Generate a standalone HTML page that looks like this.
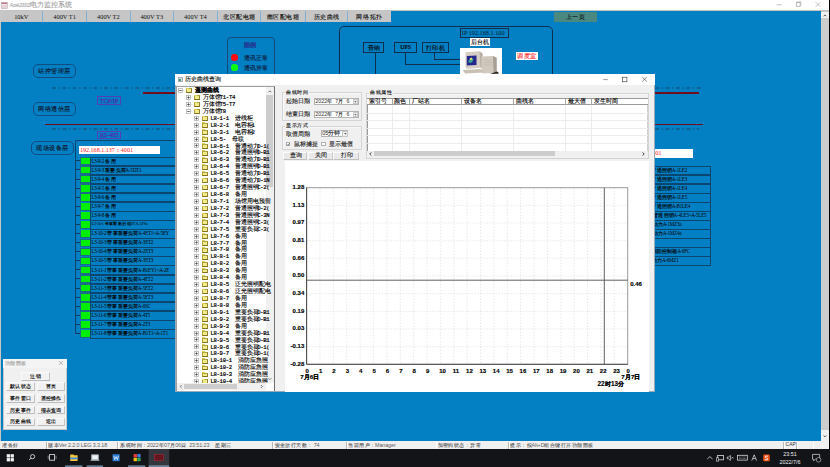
<!DOCTYPE html><html><head><meta charset="utf-8"><style>
html,body{margin:0;padding:0;}
body{width:830px;height:467px;overflow:hidden;position:relative;background:#0380c3;font-family:"Liberation Sans",sans-serif;}
div{position:absolute;box-sizing:border-box;}
.t{white-space:nowrap;line-height:1;}
.sr{font-family:"Liberation Serif",serif;}
.c{display:inline-block;vertical-align:top;line-height:1;text-align-last:justify;font-family:"Liberation Sans",sans-serif;-webkit-text-stroke:0.6px currentColor;}
body.cjk .c{-webkit-text-stroke:0.12px currentColor;}
</style></head><body>
<div style="left:0px;top:0px;width:830px;height:10.5px;background:#fff;"></div>
<div style="left:0px;top:10.1px;width:830px;height:0.7px;background:#c4c4c4;"></div>
<svg style="position:absolute;left:1px;top:1.5px;" width="7" height="7"><rect x="0.3" y="0.3" width="6.2" height="6.2" fill="#f4eeee" stroke="#b8a8b0" stroke-width="0.6"/><rect x="0.6" y="0.6" width="5.6" height="1.4" fill="#c07888"/><path d="M1 3.3 H6 M1 4.6 H6 M1 5.8 H6" stroke="#c8a0a8" stroke-width="0.4"/></svg>
<div class="t" style="left:9.8px;top:1.6px;color:#a0a0a0;font-size:6.6px;"><span style="font-size:5.2px;letter-spacing:-0.72px;vertical-align:0.3px;">Acrel-2000Z</span><span class="c" style="width:6em">电力监控系统</span></div>
<svg style="position:absolute;left:770px;top:0px;" width="55" height="10"><line x1="6.5" y1="4.7" x2="11.5" y2="4.7" stroke="#999" stroke-width="0.6"/><rect x="26.3" y="2.6" width="3.8" height="3.8" fill="none" stroke="#999" stroke-width="0.6"/><path d="M27.3 2.6 V1.8 H30.9 V5.4 H30.1" fill="none" stroke="#999" stroke-width="0.5"/><path d="M45.7 2.2 L50.3 6.8 M50.3 2.2 L45.7 6.8" stroke="#999" stroke-width="0.6"/></svg>
<div style="left:0px;top:10.8px;width:42.5px;height:11.5px;background:#c6c6c6;"></div>
<div class="t sr" style="left:0px;top:13.6px;width:42.5px;text-align:center;font-size:6.4px;color:#111;">10kV</div>
<div style="left:42.5px;top:10.8px;width:44.2px;height:11.5px;background:#c6c6c6;"></div>
<div style="left:42.0px;top:10.8px;width:1.1px;height:11.5px;background:#7fb0d8;"></div>
<div class="t sr" style="left:42.5px;top:13.6px;width:44.2px;text-align:center;font-size:6.4px;color:#111;">400V T1</div>
<div style="left:86.7px;top:10.8px;width:43.3px;height:11.5px;background:#c6c6c6;"></div>
<div style="left:86.2px;top:10.8px;width:1.1px;height:11.5px;background:#7fb0d8;"></div>
<div class="t sr" style="left:86.7px;top:13.6px;width:43.3px;text-align:center;font-size:6.4px;color:#111;">400V T2</div>
<div style="left:130px;top:10.8px;width:43.5px;height:11.5px;background:#c6c6c6;"></div>
<div style="left:129.5px;top:10.8px;width:1.1px;height:11.5px;background:#7fb0d8;"></div>
<div class="t sr" style="left:130px;top:13.6px;width:43.5px;text-align:center;font-size:6.4px;color:#111;">400V T3</div>
<div style="left:173.5px;top:10.8px;width:43.80000000000001px;height:11.5px;background:#c6c6c6;"></div>
<div style="left:173.0px;top:10.8px;width:1.1px;height:11.5px;background:#7fb0d8;"></div>
<div class="t sr" style="left:173.5px;top:13.6px;width:43.80000000000001px;text-align:center;font-size:6.4px;color:#111;">400V T4</div>
<div style="left:217.3px;top:10.8px;width:43.5px;height:11.5px;background:#c6c6c6;"></div>
<div style="left:216.8px;top:10.8px;width:1.1px;height:11.5px;background:#7fb0d8;"></div>
<div class="t " style="left:217.3px;top:13.6px;width:43.5px;text-align:center;font-size:6.4px;color:#111;"><span class="c" style="width:5em">北区配电箱</span></div>
<div style="left:260.8px;top:10.8px;width:44.19999999999999px;height:11.5px;background:#c6c6c6;"></div>
<div style="left:260.3px;top:10.8px;width:1.1px;height:11.5px;background:#7fb0d8;"></div>
<div class="t " style="left:260.8px;top:13.6px;width:44.19999999999999px;text-align:center;font-size:6.4px;color:#111;"><span class="c" style="width:5em">南区配电箱</span></div>
<div style="left:305px;top:10.8px;width:42.60000000000002px;height:11.5px;background:#c6c6c6;"></div>
<div style="left:304.5px;top:10.8px;width:1.1px;height:11.5px;background:#7fb0d8;"></div>
<div class="t " style="left:305px;top:13.6px;width:42.60000000000002px;text-align:center;font-size:6.4px;color:#111;"><span class="c" style="width:4em">历史曲线</span></div>
<div style="left:347.6px;top:10.8px;width:43.39999999999998px;height:11.5px;background:#c6c6c6;"></div>
<div style="left:347.1px;top:10.8px;width:1.1px;height:11.5px;background:#7fb0d8;"></div>
<div class="t " style="left:347.6px;top:13.6px;width:43.39999999999998px;text-align:center;font-size:6.4px;color:#111;"><span class="c" style="width:4em">网络拓扑</span></div>
<div style="left:553.6px;top:11.6px;width:43px;height:10.9px;background:#4a8880;"></div>
<div class="t" style="left:553.6px;top:13.8px;width:43px;text-align:center;font-size:6.4px;color:#0a1414;"><span class="c" style="width:3em">上一页</span></div>
<div style="left:0px;top:10.6px;width:1.1px;height:430.4px;background:#c8c8c8;"></div>
<div style="left:821.0px;top:10.6px;width:7.7px;height:430.4px;background:#cdcdcd;"></div>
<div style="left:821.0px;top:10.6px;width:7.7px;height:7.7px;background:#f0f0f0;border-top:0.6px solid #c8c8c8;"></div>
<div style="left:821.0px;top:430.4px;width:7.7px;height:10.6px;background:#f0f0f0;"></div>
<svg style="position:absolute;left:821px;top:10px;" width="8" height="432"><path d="M2.6 6.3 L4.0 4.9 L5.4 6.3" fill="none" stroke="#505050" stroke-width="0.9"/><path d="M2.6 425.5 L4.0 426.9 L5.4 425.5" fill="none" stroke="#505050" stroke-width="0.9"/></svg>
<div style="left:828.6px;top:0px;width:1.4px;height:467px;background:#050505;"></div>
<div style="left:227.2px;top:36.6px;width:47.6px;height:60px;border:0.9px solid #144a78;border-radius:4px;"></div>
<div class="t" style="left:244px;top:41.8px;font-size:6.2px;color:#1f3f98;font-weight:bold;"><span class="c" style="width:2em">图例</span></div>
<div style="left:231.2px;top:54.3px;width:6.6px;height:6.6px;background:#ff0a0a;border-radius:50%;"></div>
<div style="left:231.2px;top:64.4px;width:6.6px;height:6.6px;background:#0aff0a;border-radius:50%;"></div>
<div class="t" style="left:244px;top:55px;font-size:6px;color:#0a1a3a;"><span class="c" style="width:4em">通讯正常</span></div>
<div class="t" style="left:244px;top:65px;font-size:6px;color:#0a1a3a;"><span class="c" style="width:4em">通讯异常</span></div>
<div style="left:339.4px;top:26.2px;width:213.2px;height:80px;border:0.9px solid #0c2f4f;border-radius:5px;"></div>
<div style="left:363.2px;top:42.4px;width:21.30000000000001px;height:10.9px;border:0.9px solid #0c2f4f;"></div>
<div class="t " style="left:363.2px;top:45.2px;width:21.30000000000001px;text-align:center;color:#000;font-size:6.2px;"><span class="c" style="width:2em">音响</span></div>
<div style="left:394.2px;top:42.4px;width:23.0px;height:10.9px;border:0.9px solid #0c2f4f;"></div>
<div class="t sr" style="left:394.2px;top:45.2px;width:23.0px;text-align:center;color:#000;-webkit-text-stroke:0.2px #000;font-size:5.8px;">UPS</div>
<div style="left:421.6px;top:42.4px;width:27.399999999999977px;height:10.9px;border:0.9px solid #0c2f4f;"></div>
<div class="t " style="left:421.6px;top:45.2px;width:27.399999999999977px;text-align:center;color:#000;font-size:6.2px;"><span class="c" style="width:3em">打印机</span></div>
<div style="left:375.0px;top:53.3px;width:0.9px;height:25px;background:#0c2f4f;"></div>
<div style="left:405.0px;top:53.3px;width:0.9px;height:11.3px;background:#0c2f4f;"></div>
<div style="left:405.0px;top:63.8px;width:54.6px;height:0.9px;background:#0c2f4f;"></div>
<div style="left:434.2px;top:53.3px;width:0.9px;height:6.3px;background:#0c2f4f;"></div>
<div style="left:434.2px;top:58.9px;width:25.4px;height:0.9px;background:#0c2f4f;"></div>
<div style="left:460.4px;top:28.4px;width:48.3px;height:9.4px;border:0.9px solid #0c2f4f;"></div>
<div class="t" style="left:461.8px;top:30.3px;font-size:6.25px;color:#0a1a2a;font-family:'Liberation Serif',serif;">IP 192.168.1.100</div>
<div style="left:470.2px;top:38.2px;width:20px;height:8.3px;background:#fff;"></div>
<div class="t" style="left:470.2px;top:39.3px;width:20px;text-align:center;font-size:6.2px;color:#000;"><span class="c" style="width:3em">后台机</span></div>
<div style="left:459.6px;top:48.0px;width:42.6px;height:30px;background:#fff;"></div>
<svg style="position:absolute;left:459.6px;top:48px;" width="43" height="26"><path d="M5.5 4.2 L19.5 3.2 L22.5 5.5 L22.5 19.5 L7.0 21.0 L5.5 19.5Z" fill="#d6cec4"/><path d="M19.5 3.2 L22.5 5.5 L22.5 19.5 L20.5 19.8Z" fill="#b8aea2"/><path d="M6.8 7.9 L16.5 7.5 L16.5 17.0 L6.8 17.4Z" fill="#23278e"/><path d="M8.5 12.5 Q10.5 9.8 13.5 10.8 L12.2 14.2 Q10 15.2 8.5 14.6Z" fill="#3aa890"/><path d="M9.6 10.6 L11.8 9.6 L12.4 11.4 L10.2 12.0Z" fill="#e8e070"/><path d="M21.4 8.5 L33.0 8.0 L36.6 9.8 L36.6 24.8 L24.0 25.5 L21.4 24.2Z" fill="#d2c9be"/><path d="M33.0 8.0 L36.6 9.8 L36.6 24.8 L33.6 24.6Z" fill="#a89e94"/><path d="M24 12 H32 M24 14.5 H32 M24 17 H32" stroke="#b8afa4" stroke-width="0.5"/><path d="M2.8 22.0 L20.5 21.0 L23.5 24.5 L5.0 25.6Z" fill="#c9c0b4"/><path d="M36.6 23.5 Q39.5 24.5 38.5 25.8 L30 26 Z" fill="#2a2a2a"/></svg>
<div style="left:515.5px;top:52.1px;width:22.5px;height:8.1px;background:#fff;"></div>
<div class="t" style="left:515.5px;top:53.0px;width:22.5px;text-align:center;font-size:6.2px;color:#ff1a1a;"><span class="c" style="width:3em">调度室</span></div>
<div style="left:32.6px;top:63.7px;width:43.4px;height:14.599999999999994px;border:0.9px solid #0e4d80;border-radius:5px;"></div>
<div class="t" style="left:32.6px;top:67.8px;width:43.4px;text-align:center;font-size:6.4px;color:#08142a;"><span class="c" style="width:5em">站控管理层</span></div>
<div style="left:32.6px;top:102.2px;width:43.4px;height:14.299999999999997px;border:0.9px solid #0e4d80;border-radius:5px;"></div>
<div class="t" style="left:32.6px;top:106.14999999999999px;width:43.4px;text-align:center;font-size:6.4px;color:#08142a;"><span class="c" style="width:5em">网络通信层</span></div>
<div style="left:30.6px;top:140.6px;width:43.4px;height:14.400000000000006px;border:0.9px solid #0e4d80;border-radius:5px;"></div>
<div class="t" style="left:30.6px;top:144.60000000000002px;width:43.4px;text-align:center;font-size:6.4px;color:#08142a;"><span class="c" style="width:5em">现场设备层</span></div>
<svg style="position:absolute;left:52.2px;top:86.8px;" width="650.8" height="2"><line x1="0" y1="1" x2="650.8" y2="1" stroke="#164466" stroke-width="0.95" stroke-dasharray="3.8 2.7 1.2 2.7"/></svg>
<div style="left:142.5px;top:92.45px;width:556px;height:1.8px;background:#6e0e1c;"></div>
<div style="left:45px;top:123.7px;width:657.7px;height:1.8px;background:#6e0e1c;"></div>
<svg style="position:absolute;left:52.2px;top:128.4px;" width="646.8" height="2"><line x1="0" y1="1" x2="646.8" y2="1" stroke="#164466" stroke-width="0.95" stroke-dasharray="3.8 2.7 1.2 2.7"/></svg>
<div style="left:96.9px;top:96px;width:24.19999999999999px;height:9.299999999999997px;border:0.9px solid #5040b8;"></div>
<div class="t sr" style="left:96.9px;top:97.8px;width:24.19999999999999px;text-align:center;font-size:6.2px;color:#4a30b0;-webkit-text-stroke:0.25px #4a30b0;">TCP/IP</div>
<div style="left:97px;top:130.6px;width:24.200000000000003px;height:8.300000000000011px;border:0.9px solid #5040b8;"></div>
<div class="t sr" style="left:97px;top:132.4px;width:24.200000000000003px;text-align:center;font-size:6.2px;color:#4a30b0;-webkit-text-stroke:0.25px #4a30b0;">RS-485</div>
<div style="left:75.0px;top:140.0px;width:200px;height:194px;border-left:1.2px solid #0b4670;border-top:1.2px solid #0b4670;border-top-left-radius:2px;"></div>
<div style="left:79px;top:146px;width:80.9px;height:8.2px;background:#fff;"></div>
<div class="t" style="left:80.0px;top:147.2px;font-size:6.05px;color:#ff2020;font-family:'Liberation Serif',serif;">192.168.1.137<span class="c" style="width:1em">：</span>4001</div>
<div style="left:75.6px;top:160.4px;width:4.4px;height:0.9px;background:#0b3a5e;"></div>
<div style="left:80.3px;top:157.1px;width:9.6px;height:8.48px;background:#1a6a8a;"></div>
<div style="left:80.9px;top:157.8px;width:8.7px;height:6.5px;background:#00ee00;"></div>
<div style="left:89.9px;top:156.5px;width:120px;height:9.68px;border:1.1px solid #0b4670;border-right:none;"></div>
<div class="t" style="left:91.5px;top:158.6px;font-size:5.1px;color:#000;letter-spacing:-0.26px;font-family:'Liberation Serif',serif;">L3-9-2 <span class="c" style="width:2em">备用</span></div>
<div style="left:75.6px;top:169.48000000000002px;width:4.4px;height:0.9px;background:#0b3a5e;"></div>
<div style="left:80.3px;top:166.18px;width:9.6px;height:8.48px;background:#1a6a8a;"></div>
<div style="left:80.9px;top:166.88000000000002px;width:8.7px;height:6.5px;background:#00ee00;"></div>
<div style="left:89.9px;top:165.58px;width:120px;height:9.68px;border:1.1px solid #0b4670;border-right:none;"></div>
<div class="t" style="left:91.5px;top:167.68px;font-size:5.1px;color:#000;letter-spacing:-0.26px;font-family:'Liberation Serif',serif;">L3-9-3 <span class="c" style="width:4em">重要负荷</span>A-5DT1</div>
<div style="left:75.6px;top:178.56px;width:4.4px;height:0.9px;background:#0b3a5e;"></div>
<div style="left:80.3px;top:175.26px;width:9.6px;height:8.48px;background:#1a6a8a;"></div>
<div style="left:80.9px;top:175.96px;width:8.7px;height:6.5px;background:#00ee00;"></div>
<div style="left:89.9px;top:174.66px;width:120px;height:9.68px;border:1.1px solid #0b4670;border-right:none;"></div>
<div class="t" style="left:91.5px;top:176.76px;font-size:5.1px;color:#000;letter-spacing:-0.26px;font-family:'Liberation Serif',serif;">L3-9-4 <span class="c" style="width:2em">备用</span></div>
<div style="left:75.6px;top:187.64000000000001px;width:4.4px;height:0.9px;background:#0b3a5e;"></div>
<div style="left:80.3px;top:184.34px;width:9.6px;height:8.48px;background:#1a6a8a;"></div>
<div style="left:80.9px;top:185.04000000000002px;width:8.7px;height:6.5px;background:#00ee00;"></div>
<div style="left:89.9px;top:183.74px;width:120px;height:9.68px;border:1.1px solid #0b4670;border-right:none;"></div>
<div class="t" style="left:91.5px;top:185.84px;font-size:5.1px;color:#000;letter-spacing:-0.26px;font-family:'Liberation Serif',serif;">L3-9-5 <span class="c" style="width:2em">备用</span></div>
<div style="left:75.6px;top:196.72px;width:4.4px;height:0.9px;background:#0b3a5e;"></div>
<div style="left:80.3px;top:193.42px;width:9.6px;height:8.48px;background:#1a6a8a;"></div>
<div style="left:80.9px;top:194.12px;width:8.7px;height:6.5px;background:#00ee00;"></div>
<div style="left:89.9px;top:192.82px;width:120px;height:9.68px;border:1.1px solid #0b4670;border-right:none;"></div>
<div class="t" style="left:91.5px;top:194.92px;font-size:5.1px;color:#000;letter-spacing:-0.26px;font-family:'Liberation Serif',serif;">L3-9-6 <span class="c" style="width:2em">备用</span></div>
<div style="left:75.6px;top:205.8px;width:4.4px;height:0.9px;background:#0b3a5e;"></div>
<div style="left:80.3px;top:202.5px;width:9.6px;height:8.48px;background:#1a6a8a;"></div>
<div style="left:80.9px;top:203.20000000000002px;width:8.7px;height:6.5px;background:#00ee00;"></div>
<div style="left:89.9px;top:201.9px;width:120px;height:9.68px;border:1.1px solid #0b4670;border-right:none;"></div>
<div class="t" style="left:91.5px;top:204.0px;font-size:5.1px;color:#000;letter-spacing:-0.26px;font-family:'Liberation Serif',serif;">L3-9-7 <span class="c" style="width:2em">备用</span></div>
<div style="left:75.6px;top:214.88000000000002px;width:4.4px;height:0.9px;background:#0b3a5e;"></div>
<div style="left:80.3px;top:211.58px;width:9.6px;height:8.48px;background:#1a6a8a;"></div>
<div style="left:80.9px;top:212.28000000000003px;width:8.7px;height:6.5px;background:#00ee00;"></div>
<div style="left:89.9px;top:210.98000000000002px;width:120px;height:9.68px;border:1.1px solid #0b4670;border-right:none;"></div>
<div class="t" style="left:91.5px;top:213.08px;font-size:5.1px;color:#000;letter-spacing:-0.26px;font-family:'Liberation Serif',serif;">L3-9-8 <span class="c" style="width:2em">备用</span></div>
<div style="left:75.6px;top:223.96px;width:4.4px;height:0.9px;background:#0b3a5e;"></div>
<div style="left:80.3px;top:220.66px;width:9.6px;height:8.48px;background:#1a6a8a;"></div>
<div style="left:80.9px;top:221.36px;width:8.7px;height:6.5px;background:#00ee00;"></div>
<div style="left:89.9px;top:220.06px;width:120px;height:9.68px;border:1.1px solid #0b4670;border-right:none;"></div>
<div class="t" style="left:91.5px;top:222.16px;font-size:4.3px;color:#000;letter-spacing:-0.26px;font-family:'Liberation Serif',serif;">L3-10-1 <span class="c" style="width:6em">带事重新启动</span>DCS.APSa</div>
<div style="left:75.6px;top:233.04px;width:4.4px;height:0.9px;background:#0b3a5e;"></div>
<div style="left:80.3px;top:229.73999999999998px;width:9.6px;height:8.48px;background:#1a6a8a;"></div>
<div style="left:80.9px;top:230.44px;width:8.7px;height:6.5px;background:#00ee00;"></div>
<div style="left:89.9px;top:229.14px;width:120px;height:9.68px;border:1.1px solid #0b4670;border-right:none;"></div>
<div class="t" style="left:91.5px;top:231.23999999999998px;font-size:5.1px;color:#000;letter-spacing:-0.26px;font-family:'Liberation Serif',serif;">L3-10-2 <span class="c" style="width:6em">带事重要负荷</span>A-4ET1~A-5EY</div>
<div style="left:75.6px;top:242.12px;width:4.4px;height:0.9px;background:#0b3a5e;"></div>
<div style="left:80.3px;top:238.82px;width:9.6px;height:8.48px;background:#1a6a8a;"></div>
<div style="left:80.9px;top:239.52px;width:8.7px;height:6.5px;background:#00ee00;"></div>
<div style="left:89.9px;top:238.22px;width:120px;height:9.68px;border:1.1px solid #0b4670;border-right:none;"></div>
<div class="t" style="left:91.5px;top:240.32px;font-size:5.1px;color:#000;letter-spacing:-0.26px;font-family:'Liberation Serif',serif;">L3-10-3 <span class="c" style="width:6em">带事重要负荷</span>A-3ET2</div>
<div style="left:75.6px;top:251.20000000000002px;width:4.4px;height:0.9px;background:#0b3a5e;"></div>
<div style="left:80.3px;top:247.9px;width:9.6px;height:8.48px;background:#1a6a8a;"></div>
<div style="left:80.9px;top:248.60000000000002px;width:8.7px;height:6.5px;background:#00ee00;"></div>
<div style="left:89.9px;top:247.3px;width:120px;height:9.68px;border:1.1px solid #0b4670;border-right:none;"></div>
<div class="t" style="left:91.5px;top:249.4px;font-size:5.1px;color:#000;letter-spacing:-0.26px;font-family:'Liberation Serif',serif;">L3-10-4 <span class="c" style="width:6em">带事重要负荷</span>A-2ET3</div>
<div style="left:75.6px;top:260.28px;width:4.4px;height:0.9px;background:#0b3a5e;"></div>
<div style="left:80.3px;top:256.98px;width:9.6px;height:8.48px;background:#1a6a8a;"></div>
<div style="left:80.9px;top:257.68px;width:8.7px;height:6.5px;background:#00ee00;"></div>
<div style="left:89.9px;top:256.38px;width:120px;height:9.68px;border:1.1px solid #0b4670;border-right:none;"></div>
<div class="t" style="left:91.5px;top:258.48px;font-size:5.1px;color:#000;letter-spacing:-0.26px;font-family:'Liberation Serif',serif;">L3-10-5 <span class="c" style="width:6em">带事重要负荷</span>A-3ET3</div>
<div style="left:75.6px;top:269.36px;width:4.4px;height:0.9px;background:#0b3a5e;"></div>
<div style="left:80.3px;top:266.06000000000006px;width:9.6px;height:8.48px;background:#1a6a8a;"></div>
<div style="left:80.9px;top:266.76000000000005px;width:8.7px;height:6.5px;background:#00ee00;"></div>
<div style="left:89.9px;top:265.46000000000004px;width:120px;height:9.68px;border:1.1px solid #0b4670;border-right:none;"></div>
<div class="t" style="left:91.5px;top:267.56000000000006px;font-size:5.1px;color:#000;letter-spacing:-0.26px;font-family:'Liberation Serif',serif;">L3-11-1 <span class="c" style="width:6em">带事重要负荷</span>A-B1EY1~A-2E</div>
<div style="left:75.6px;top:278.44px;width:4.4px;height:0.9px;background:#0b3a5e;"></div>
<div style="left:80.3px;top:275.14000000000004px;width:9.6px;height:8.48px;background:#1a6a8a;"></div>
<div style="left:80.9px;top:275.84000000000003px;width:8.7px;height:6.5px;background:#00ee00;"></div>
<div style="left:89.9px;top:274.54px;width:120px;height:9.68px;border:1.1px solid #0b4670;border-right:none;"></div>
<div class="t" style="left:91.5px;top:276.64000000000004px;font-size:5.1px;color:#000;letter-spacing:-0.26px;font-family:'Liberation Serif',serif;">L3-11-2 <span class="c" style="width:6em">带事重要负荷</span>A-4ET2</div>
<div style="left:75.6px;top:287.52px;width:4.4px;height:0.9px;background:#0b3a5e;"></div>
<div style="left:80.3px;top:284.22px;width:9.6px;height:8.48px;background:#1a6a8a;"></div>
<div style="left:80.9px;top:284.92px;width:8.7px;height:6.5px;background:#00ee00;"></div>
<div style="left:89.9px;top:283.62px;width:120px;height:9.68px;border:1.1px solid #0b4670;border-right:none;"></div>
<div class="t" style="left:91.5px;top:285.72px;font-size:5.1px;color:#000;letter-spacing:-0.26px;font-family:'Liberation Serif',serif;">L3-11-3 <span class="c" style="width:6em">带事重要负荷</span>A-5ET2</div>
<div style="left:75.6px;top:296.59999999999997px;width:4.4px;height:0.9px;background:#0b3a5e;"></div>
<div style="left:80.3px;top:293.3px;width:9.6px;height:8.48px;background:#1a6a8a;"></div>
<div style="left:80.9px;top:294.0px;width:8.7px;height:6.5px;background:#00ee00;"></div>
<div style="left:89.9px;top:292.7px;width:120px;height:9.68px;border:1.1px solid #0b4670;border-right:none;"></div>
<div class="t" style="left:91.5px;top:294.8px;font-size:5.1px;color:#000;letter-spacing:-0.26px;font-family:'Liberation Serif',serif;">L3-11-4 <span class="c" style="width:6em">带事重要负荷</span>A-5ET3</div>
<div style="left:75.6px;top:305.67999999999995px;width:4.4px;height:0.9px;background:#0b3a5e;"></div>
<div style="left:80.3px;top:302.38px;width:9.6px;height:8.48px;background:#1a6a8a;"></div>
<div style="left:80.9px;top:303.08px;width:8.7px;height:6.5px;background:#00ee00;"></div>
<div style="left:89.9px;top:301.78px;width:120px;height:9.68px;border:1.1px solid #0b4670;border-right:none;"></div>
<div class="t" style="left:91.5px;top:303.88px;font-size:5.1px;color:#000;letter-spacing:-0.26px;font-family:'Liberation Serif',serif;">L3-11-5 <span class="c" style="width:6em">带事重要负荷</span>A-6SC</div>
<div style="left:75.6px;top:314.76px;width:4.4px;height:0.9px;background:#0b3a5e;"></div>
<div style="left:80.3px;top:311.46000000000004px;width:9.6px;height:8.48px;background:#1a6a8a;"></div>
<div style="left:80.9px;top:312.16px;width:8.7px;height:6.5px;background:#00ee00;"></div>
<div style="left:89.9px;top:310.86px;width:120px;height:9.68px;border:1.1px solid #0b4670;border-right:none;"></div>
<div class="t" style="left:91.5px;top:312.96000000000004px;font-size:5.1px;color:#000;letter-spacing:-0.26px;font-family:'Liberation Serif',serif;">L3-11-6 <span class="c" style="width:6em">带事重要负荷</span>A-4T5</div>
<div style="left:75.6px;top:323.84px;width:4.4px;height:0.9px;background:#0b3a5e;"></div>
<div style="left:80.3px;top:320.54px;width:9.6px;height:8.48px;background:#1a6a8a;"></div>
<div style="left:80.9px;top:321.24px;width:8.7px;height:6.5px;background:#00ee00;"></div>
<div style="left:89.9px;top:319.94px;width:120px;height:9.68px;border:1.1px solid #0b4670;border-right:none;"></div>
<div class="t" style="left:91.5px;top:322.04px;font-size:5.1px;color:#000;letter-spacing:-0.26px;font-family:'Liberation Serif',serif;">L3-11-7 <span class="c" style="width:6em">带事重要负荷</span>A-2T3</div>
<div style="left:75.6px;top:332.91999999999996px;width:4.4px;height:0.9px;background:#0b3a5e;"></div>
<div style="left:80.3px;top:329.62px;width:9.6px;height:8.48px;background:#1a6a8a;"></div>
<div style="left:80.9px;top:330.32px;width:8.7px;height:6.5px;background:#00ee00;"></div>
<div style="left:89.9px;top:329.02px;width:120px;height:9.68px;border:1.1px solid #0b4670;border-right:none;"></div>
<div class="t" style="left:91.5px;top:331.12px;font-size:5.1px;color:#000;letter-spacing:-0.26px;font-family:'Liberation Serif',serif;">L3-11-8 <span class="c" style="width:6em">带事重要负荷</span>A-B1T1~A-1T1</div>
<div style="left:612.4px;top:149.1px;width:80.9px;height:8.6px;background:#fff;"></div>
<div class="t" style="left:608.7px;top:150.3px;font-size:6.05px;color:#ff2020;font-family:'Liberation Serif',serif;">192.168.1.138<span class="c" style="width:1em">：</span>4001</div>
<div style="left:600px;top:165.8px;width:110.5px;height:9.65px;border:1.1px solid #0b4670;"></div>
<div class="t" style="left:537px;top:167.9px;width:150px;text-align:right;font-size:5.1px;color:#000;letter-spacing:-0.26px;font-family:'Liberation Serif',serif;">L3-12-1 <span class="c" style="width:4em">普通照明</span>A-1LE2</div>
<div style="left:600px;top:174.85000000000002px;width:110.5px;height:9.65px;border:1.1px solid #0b4670;"></div>
<div class="t" style="left:537px;top:176.95000000000002px;width:150px;text-align:right;font-size:5.1px;color:#000;letter-spacing:-0.26px;font-family:'Liberation Serif',serif;">L3-12-2 <span class="c" style="width:4em">普通照明</span>A-1LE3</div>
<div style="left:600px;top:183.9px;width:110.5px;height:9.65px;border:1.1px solid #0b4670;"></div>
<div class="t" style="left:537px;top:186.0px;width:150px;text-align:right;font-size:5.1px;color:#000;letter-spacing:-0.26px;font-family:'Liberation Serif',serif;">L3-12-3 <span class="c" style="width:4em">普通照明</span>A-1LE4</div>
<div style="left:600px;top:192.95000000000002px;width:110.5px;height:9.65px;border:1.1px solid #0b4670;"></div>
<div class="t" style="left:537px;top:195.05px;width:150px;text-align:right;font-size:5.1px;color:#000;letter-spacing:-0.26px;font-family:'Liberation Serif',serif;">L3-12-4 <span class="c" style="width:4em">普通照明</span>A-1LE5</div>
<div style="left:600px;top:202.0px;width:110.5px;height:9.65px;border:1.1px solid #0b4670;"></div>
<div class="t" style="left:540px;top:204.1px;width:150px;text-align:right;font-size:5.1px;color:#000;letter-spacing:-0.26px;font-family:'Liberation Serif',serif;">L3-12-5 <span class="c" style="width:4em">普通照明</span>A-B1LE4</div>
<div style="left:600px;top:211.05px;width:110.5px;height:9.65px;border:1.1px solid #0b4670;"></div>
<div class="t" style="left:556.3px;top:213.15px;width:150px;text-align:right;font-size:5.1px;color:#000;letter-spacing:-0.26px;font-family:'Liberation Serif',serif;">L3-12-6 <span class="c" style="width:4em">普通照明</span>A-4LE5~A-5LE5</div>
<div style="left:600px;top:220.10000000000002px;width:110.5px;height:9.65px;border:1.1px solid #0b4670;"></div>
<div class="t" style="left:531.2px;top:222.20000000000002px;width:150px;text-align:right;font-size:5.1px;color:#000;letter-spacing:-0.26px;font-family:'Liberation Serif',serif;">L3-12-7 <span class="c" style="width:4em">普通动力</span>A-1MZ3a</div>
<div style="left:600px;top:229.15000000000003px;width:110.5px;height:9.65px;border:1.1px solid #0b4670;"></div>
<div class="t" style="left:531.2px;top:231.25000000000003px;width:150px;text-align:right;font-size:5.1px;color:#000;letter-spacing:-0.26px;font-family:'Liberation Serif',serif;">L3-12-8 <span class="c" style="width:4em">普通动力</span>A-1MZ4a</div>
<div style="left:600px;top:238.20000000000002px;width:110.5px;height:9.65px;border:1.1px solid #0b4670;"></div>
<div style="left:600px;top:247.25px;width:110.5px;height:9.65px;border:1.1px solid #0b4670;"></div>
<div class="t" style="left:540px;top:249.35px;width:150px;text-align:right;font-size:5.1px;color:#000;letter-spacing:-0.26px;font-family:'Liberation Serif',serif;">L3-13-1 <span class="c" style="width:5em">消防控制箱</span>A-6FC</div>
<div style="left:600px;top:256.3px;width:110.5px;height:9.65px;border:1.1px solid #0b4670;"></div>
<div class="t" style="left:528.5px;top:258.40000000000003px;width:150px;text-align:right;font-size:5.1px;color:#000;letter-spacing:-0.26px;font-family:'Liberation Serif',serif;">L3-13-2 <span class="c" style="width:4em">普通动力</span>A-6MZ1</div>
<div style="left:2.6px;top:358.8px;width:64.5px;height:71.5px;background:#f0f0f0;border:0.6px solid #c8c8c8;"></div>
<div style="left:3px;top:359.2px;width:63.7px;height:9px;background:#f4f4f4;"></div>
<div class="t" style="left:4.5px;top:361px;font-size:5.4px;color:#a0a0a0;"><span class="c" style="width:4em">功能面板</span></div>
<svg style="position:absolute;left:58px;top:360px;" width="6" height="6"><path d="M0.9 1.0 L4.9 5.0 M4.9 1.0 L0.9 5.0" stroke="#909090" stroke-width="0.6"/></svg>
<div style="left:21.4px;top:372.1px;width:28.200000000000003px;height:8.799999999999988px;background:#f1f1f1;border:0.5px solid #fafafa;border-right:0.7px solid #c4c4c4;border-bottom:0.8px solid #bcbcbc;"></div>
<div class="t" style="left:21.4px;top:374.15000000000003px;width:28.200000000000003px;text-align:center;font-size:5.1px;color:#000;"><span class="c" style="width:2em">注销</span></div>
<div style="left:6px;top:382.4px;width:29.1px;height:8.800000000000045px;background:#f1f1f1;border:0.5px solid #fafafa;border-right:0.7px solid #c4c4c4;border-bottom:0.8px solid #bcbcbc;"></div>
<div class="t" style="left:6px;top:384.45px;width:29.1px;text-align:center;font-size:5.1px;color:#000;"><span class="c" style="width:4em">默认状态</span></div>
<div style="left:36.8px;top:382.4px;width:28.60000000000001px;height:8.800000000000045px;background:#f1f1f1;border:0.5px solid #fafafa;border-right:0.7px solid #c4c4c4;border-bottom:0.8px solid #bcbcbc;"></div>
<div class="t" style="left:36.8px;top:384.45px;width:28.60000000000001px;text-align:center;font-size:5.1px;color:#000;"><span class="c" style="width:2em">首页</span></div>
<div style="left:6px;top:394px;width:29.1px;height:8.6px;background:#f1f1f1;border:0.5px solid #fafafa;border-right:0.7px solid #c4c4c4;border-bottom:0.8px solid #bcbcbc;"></div>
<div class="t" style="left:6px;top:395.95px;width:29.1px;text-align:center;font-size:5.1px;color:#000;"><span class="c" style="width:4em">事件窗口</span></div>
<div style="left:36.8px;top:394px;width:28.60000000000001px;height:8.6px;background:#f1f1f1;border:0.5px solid #fafafa;border-right:0.7px solid #c4c4c4;border-bottom:0.8px solid #bcbcbc;"></div>
<div class="t" style="left:36.8px;top:395.95px;width:28.60000000000001px;text-align:center;font-size:5.1px;color:#000;"><span class="c" style="width:4em">遥控操作</span></div>
<div style="left:6px;top:405.5px;width:29.1px;height:8.799999999999988px;background:#f1f1f1;border:0.5px solid #fafafa;border-right:0.7px solid #c4c4c4;border-bottom:0.8px solid #bcbcbc;"></div>
<div class="t" style="left:6px;top:407.55px;width:29.1px;text-align:center;font-size:5.1px;color:#000;"><span class="c" style="width:4em">历史事件</span></div>
<div style="left:36.8px;top:405.5px;width:28.60000000000001px;height:8.799999999999988px;background:#f1f1f1;border:0.5px solid #fafafa;border-right:0.7px solid #c4c4c4;border-bottom:0.8px solid #bcbcbc;"></div>
<div class="t" style="left:36.8px;top:407.55px;width:28.60000000000001px;text-align:center;font-size:5.1px;color:#000;"><span class="c" style="width:4em">报表查询</span></div>
<div style="left:6px;top:417.5px;width:29.1px;height:8.6px;background:#f1f1f1;border:0.5px solid #fafafa;border-right:0.7px solid #c4c4c4;border-bottom:0.8px solid #bcbcbc;"></div>
<div class="t" style="left:6px;top:419.45px;width:29.1px;text-align:center;font-size:5.1px;color:#000;"><span class="c" style="width:4em">历史曲线</span></div>
<div style="left:36.8px;top:417.5px;width:28.60000000000001px;height:8.6px;background:#f1f1f1;border:0.5px solid #fafafa;border-right:0.7px solid #c4c4c4;border-bottom:0.8px solid #bcbcbc;"></div>
<div class="t" style="left:36.8px;top:419.45px;width:28.60000000000001px;text-align:center;font-size:5.1px;color:#000;"><span class="c" style="width:2em">退出</span></div>
<div style="left:0px;top:440.8px;width:828.6px;height:8.6px;background:#f0f0f0;"></div>
<div class="t" style="left:785.6px;top:443.2px;font-size:4.9px;color:#303030;">CAP</div>
<div style="left:46.3px;top:442px;width:0.6px;height:7px;background:#b8b8b8;"></div>
<div style="left:46.9px;top:442px;width:0.5px;height:7px;background:#fff;"></div>
<div style="left:117.1px;top:442px;width:0.6px;height:7px;background:#b8b8b8;"></div>
<div style="left:117.69999999999999px;top:442px;width:0.5px;height:7px;background:#fff;"></div>
<div style="left:227.7px;top:442px;width:0.6px;height:7px;background:#b8b8b8;"></div>
<div style="left:228.29999999999998px;top:442px;width:0.5px;height:7px;background:#fff;"></div>
<div style="left:272.1px;top:442px;width:0.6px;height:7px;background:#b8b8b8;"></div>
<div style="left:272.70000000000005px;top:442px;width:0.5px;height:7px;background:#fff;"></div>
<div style="left:346px;top:442px;width:0.6px;height:7px;background:#b8b8b8;"></div>
<div style="left:346.6px;top:442px;width:0.5px;height:7px;background:#fff;"></div>
<div style="left:435.7px;top:442px;width:0.6px;height:7px;background:#b8b8b8;"></div>
<div style="left:436.3px;top:442px;width:0.5px;height:7px;background:#fff;"></div>
<div style="left:508px;top:442px;width:0.6px;height:7px;background:#b8b8b8;"></div>
<div style="left:508.6px;top:442px;width:0.5px;height:7px;background:#fff;"></div>
<div style="left:783px;top:442px;width:0.6px;height:7px;background:#b8b8b8;"></div>
<div style="left:783.6px;top:442px;width:0.5px;height:7px;background:#fff;"></div>
<div style="left:796.3px;top:442px;width:0.6px;height:7px;background:#b8b8b8;"></div>
<div style="left:796.9px;top:442px;width:0.5px;height:7px;background:#fff;"></div>
<div style="left:812.8px;top:442px;width:0.6px;height:7px;background:#b8b8b8;"></div>
<div style="left:813.4px;top:442px;width:0.5px;height:7px;background:#fff;"></div>
<div class="t" style="left:2px;top:443px;font-size:5.4px;color:#606060;letter-spacing:-0.1px;"><span class="c" style="width:3em">准备好</span></div>
<div class="t" style="left:48px;top:443px;font-size:5.4px;color:#606060;letter-spacing:-0.1px;"><span class="c" style="width:2em">版本</span>Ver 2.2.0 LEG 3.3.18</div>
<div class="t" style="left:120px;top:443px;font-size:5.4px;color:#606060;letter-spacing:-0.1px;"><span class="c" style="width:5em">系统时间：</span>2022<span class="c" style="width:1em">年</span>07<span class="c" style="width:1em">月</span>06<span class="c" style="width:1em">日</span>&nbsp;&nbsp;23:51:23</div>
<div class="t" style="left:215.1px;top:443px;font-size:5.4px;color:#606060;letter-spacing:-0.1px;"><span class="c" style="width:3em">星期三</span></div>
<div class="t" style="left:274.5px;top:443px;font-size:5.4px;color:#606060;letter-spacing:-0.1px;"><span class="c" style="width:7em">安全运行天数：</span>&nbsp;74</div>
<div class="t" style="left:348px;top:443px;font-size:5.4px;color:#606060;letter-spacing:-0.1px;"><span class="c" style="width:5em">当前用户：</span>Manager</div>
<div class="t" style="left:437.5px;top:443px;font-size:5.4px;color:#606060;letter-spacing:-0.1px;"><span class="c" style="width:8em">加密狗状态：异常</span></div>
<div class="t" style="left:510px;top:443px;font-size:5.4px;color:#606060;letter-spacing:-0.1px;"><span class="c" style="width:4em">提示：按</span>Alt+D<span class="c" style="width:9em">组合键打开功能面板</span></div>
<div style="left:0px;top:449.4px;width:830px;height:17.6px;background:#121418;"></div>
<svg style="position:absolute;left:0;top:449.4px;" width="180" height="17.6"><rect x="6.7" y="5.2" width="3.3" height="3.3" fill="#f2f2f2"/><rect x="10.6" y="5.2" width="3.3" height="3.3" fill="#f2f2f2"/><rect x="6.7" y="9.1" width="3.3" height="3.3" fill="#f2f2f2"/><rect x="10.6" y="9.1" width="3.3" height="3.3" fill="#f2f2f2"/><circle cx="32.6" cy="7.6" r="2.1" fill="none" stroke="#eee" stroke-width="0.8"/><path d="M31.1 9.1 L29.2 11.0" stroke="#eee" stroke-width="0.9"/><rect x="49.6" y="5.6" width="5.0" height="5.6" fill="none" stroke="#e8e8e8" stroke-width="0.8"/><path d="M48.2 6.6 V10.2 M56.0 6.6 V10.2" stroke="#bbb" stroke-width="0.6"/><path d="M70.2 5.4 H73.4 L74.2 6.2 H77.6 V12.0 H70.2Z" fill="#f5c542"/><rect x="70.2" y="8.6" width="7.4" height="1.6" fill="#2f8ce0"/><rect x="91.2" y="5.4" width="7.6" height="6.2" fill="#b9c2ca"/><rect x="92.3" y="6.4" width="5.4" height="3.8" fill="#eef3f7"/><rect x="90.5" y="10.8" width="9" height="1.2" fill="#8a949c"/><rect x="112.6" y="5.2" width="7" height="7" fill="#2b7cd3"/><path d="M113.8 6.8 L114.8 10.6 L116.1 7.6 L117.4 10.6 L118.4 6.8" fill="none" stroke="#fff" stroke-width="0.7"/><rect x="133.6" y="5.0" width="3.3" height="3.4" fill="#e53935"/><rect x="137.3" y="5.0" width="3.3" height="3.4" fill="#3d7be0"/><rect x="133.6" y="8.8" width="3.3" height="3.4" fill="#f4c20d"/><rect x="137.3" y="8.8" width="3.3" height="3.4" fill="#34a853"/><rect x="148.6" y="0" width="20.6" height="17.6" fill="#33363c"/><rect x="154.3" y="5.6" width="9" height="6" fill="#5a141c" stroke="#b02a38" stroke-width="0.6"/><path d="M155.3 7.6 H162.3 M155.3 9.6 H162.3" stroke="#a02030" stroke-width="0.4"/><path d="M65 17.1 H82.4 M86.7 17.1 H103 M128 17.1 H145.3 M148.6 17.1 H169.2" stroke="#9cc3e6" stroke-width="1"/></svg>
<svg style="position:absolute;left:700px;top:449.4px;" width="130" height="17.6"><path d="M7.3 10.0 L9.9 7.6 L12.5 10.0" fill="none" stroke="#e0e0e0" stroke-width="0.8"/><rect x="17.6" y="6.5" width="5.8" height="4.3" fill="none" stroke="#e0e0e0" stroke-width="0.8"/><rect x="16.5" y="8.8" width="2.2" height="3.3" fill="#121418" stroke="#e0e0e0" stroke-width="0.6"/><path d="M27.2 8.0 H28.6 L30.4 6.4 V11.4 L28.6 9.8 H27.2Z" fill="none" stroke="#e0e0e0" stroke-width="0.7"/><path d="M31.6 7.9 L33.3 9.6 M33.3 7.9 L31.6 9.6" stroke="#e0e0e0" stroke-width="0.6"/><rect x="37.5" y="6.3" width="9.8" height="4.8" fill="none" stroke="#d8d8d8" stroke-width="0.8"/><path d="M39 8.0 H46 M39 9.5 H46" stroke="#bbb" stroke-width="0.5" stroke-dasharray="0.8 0.5"/><path d="M51.8 11.6 L54.2 5.8 L56.6 11.6 M52.7 9.6 H55.7" fill="none" stroke="#e8e8e8" stroke-width="0.7"/><rect x="63.2" y="5.5" width="6.6" height="6.8" rx="1" fill="#f04d14"/><path d="M68.0 7.3 Q66.5 6.6 65.4 7.3 Q64.6 8.3 66.4 8.9 Q68.3 9.5 67.4 10.6 Q66.2 11.3 64.8 10.5" fill="none" stroke="#fff" stroke-width="0.9"/><path d="M112.5 5.4 H119.6 V10.2 H115.5 L113.6 11.8 V10.2 H112.5Z" fill="none" stroke="#e0e0e0" stroke-width="0.7"/><circle cx="118.6" cy="10.8" r="2.3" fill="#121418" stroke="#d0d0d0" stroke-width="0.6"/></svg>
<div class="t" style="left:781px;top:452.0px;width:18px;text-align:center;font-size:5.4px;color:#eee;">23:51</div>
<div class="t" style="left:778px;top:459.6px;width:24px;text-align:center;font-size:5.4px;color:#eee;">2022/7/6</div>
<div style="left:174.5px;top:73.5px;width:480.79999999999995px;height:318.7px;background:#f0f0f0;border:0.5px solid #9ab;"></div>
<div style="left:175px;top:74px;width:479.79999999999995px;height:11px;background:#fff;"></div>
<div style="left:177.5px;top:76.6px;width:5.5px;height:5.5px;background:#dfe6e0;border:0.5px solid #aab;"></div>
<div style="left:178.5px;top:78.8px;width:2.2px;height:2.5px;background:#3a9a6a;"></div>
<div class="t" style="left:185px;top:77.0px;font-size:5.5px;color:#101010;"><span class="c" style="width:6em">历史曲线查询</span></div>
<svg style="position:absolute;left:600px;top:74px;" width="55" height="11"><line x1="3.3" y1="5.6" x2="7.7" y2="5.6" stroke="#555" stroke-width="0.6"/><rect x="22.3" y="3.2" width="4.6" height="4.6" fill="none" stroke="#333" stroke-width="0.6"/><path d="M42.2 3.0 L46.8 7.6 M46.8 3.0 L42.2 7.6" stroke="#333" stroke-width="0.6"/></svg>
<div style="left:176px;top:85.9px;width:98.6px;height:305.6px;background:#fff;border-left:0.7px solid #a0a0a0;border-top:0.9px solid #a0a0a0;border-right:1px solid #707070;"></div>
<div style="left:265.8px;top:86.8px;width:7.8px;height:296.2px;background:#f0f0f0;"></div>
<div style="left:266.4px;top:94.5px;width:6.4px;height:92.9px;background:#cdcdcd;"></div>
<svg style="position:absolute;left:265.8px;top:86.8px;" width="8" height="297"><path d="M2.5 5.2 L3.9 3.8 L5.3 5.2" fill="none" stroke="#606060" stroke-width="0.8"/><path d="M2.5 291.2 L3.9 292.6 L5.3 291.2" fill="none" stroke="#606060" stroke-width="0.8"/></svg>
<div style="left:176.7px;top:383px;width:89.1px;height:7px;background:#f0f0f0;"></div>
<div style="left:184.2px;top:383.8px;width:52.8px;height:5.4px;background:#cdcdcd;"></div>
<svg style="position:absolute;left:176.7px;top:383px;" width="90" height="7"><path d="M4.6 2.1 L3.2 3.5 L4.6 4.9" fill="none" stroke="#505050" stroke-width="0.8"/><path d="M84.0 2.1 L85.4 3.5 L84.0 4.9" fill="none" stroke="#505050" stroke-width="0.8"/></svg>
<div style="left:0;top:0;width:274px;height:382.8px;overflow:hidden;font-size:5.55px;line-height:1;">
<svg style="position:absolute;left:176px;top:86px;" width="90" height="297"><path d="M12.6 6.5 V25.3 M20.5 29 V300 M4.6 4.5 H8 M12.6 11.4 H16 M12.6 18.4 H16 M12.6 25.3 H16" stroke="#a8a8a8" stroke-width="0.6" stroke-dasharray="0.7 0.7" fill="none"/></svg>
<svg style="position:absolute;left:178px;top:88px;" width="5" height="5"><rect x="0.5" y="0.5" width="4" height="4" fill="#fff" stroke="#b4b4b4" stroke-width="0.8"/><line x1="1.3" y1="2.5" x2="3.7" y2="2.5" stroke="#404040" stroke-width="0.8"/></svg>
<div style="left:185.9px;top:88.4px;width:6.4px;height:4.9px;background:#f2ec88;border:0.5px solid #b0a040;border-bottom:0.8px solid #807020;border-right:0.8px solid #908030;"></div>
<div style="left:186.20000000000002px;top:87.8px;width:2.8px;height:1px;background:#e0d060;"></div>
<div class="t" style="left:195.2px;top:88.1px;color:#000;font-weight:bold;"><span style="font-size:5.55px;"><span class="c" style="width:4em">遥测曲线</span></span></div>
<svg style="position:absolute;left:186px;top:95px;" width="5" height="5"><rect x="0.5" y="0.5" width="4" height="4" fill="#fff" stroke="#b4b4b4" stroke-width="0.8"/><line x1="1.3" y1="2.5" x2="3.7" y2="2.5" stroke="#404040" stroke-width="0.8"/><line x1="2.5" y1="1.3" x2="2.5" y2="3.7" stroke="#404040" stroke-width="0.8"/></svg>
<div style="left:193.9px;top:95.33000000000001px;width:6.4px;height:4.9px;background:#f2ec88;border:0.5px solid #b0a040;border-bottom:0.8px solid #807020;border-right:0.8px solid #908030;"></div>
<div style="left:194.20000000000002px;top:94.73px;width:2.8px;height:1px;background:#e0d060;"></div>
<div class="t" style="left:203.1px;top:95.03px;color:#000;"><span style="font-size:5.55px;"><span class="c" style="width:3em">万体馆</span></span><span style="font-family:'Liberation Mono',monospace;font-size:5.6px;letter-spacing:-0.29px;-webkit-text-stroke:0.2px #000;">T1-T4</span></div>
<svg style="position:absolute;left:186px;top:102px;" width="5" height="5"><rect x="0.5" y="0.5" width="4" height="4" fill="#fff" stroke="#b4b4b4" stroke-width="0.8"/><line x1="1.3" y1="2.5" x2="3.7" y2="2.5" stroke="#404040" stroke-width="0.8"/><line x1="2.5" y1="1.3" x2="2.5" y2="3.7" stroke="#404040" stroke-width="0.8"/></svg>
<div style="left:193.9px;top:102.26px;width:6.4px;height:4.9px;background:#f2ec88;border:0.5px solid #b0a040;border-bottom:0.8px solid #807020;border-right:0.8px solid #908030;"></div>
<div style="left:194.20000000000002px;top:101.66px;width:2.8px;height:1px;background:#e0d060;"></div>
<div class="t" style="left:203.1px;top:101.96px;color:#000;"><span style="font-size:5.55px;"><span class="c" style="width:3em">万体馆</span></span><span style="font-family:'Liberation Mono',monospace;font-size:5.6px;letter-spacing:-0.29px;-webkit-text-stroke:0.2px #000;">T5-T7</span></div>
<svg style="position:absolute;left:186px;top:109px;" width="5" height="5"><rect x="0.5" y="0.5" width="4" height="4" fill="#fff" stroke="#b4b4b4" stroke-width="0.8"/><line x1="1.3" y1="2.5" x2="3.7" y2="2.5" stroke="#404040" stroke-width="0.8"/></svg>
<div style="left:193.9px;top:109.19px;width:6.4px;height:4.9px;background:#f2ec88;border:0.5px solid #b0a040;border-bottom:0.8px solid #807020;border-right:0.8px solid #908030;"></div>
<div style="left:194.20000000000002px;top:108.58999999999999px;width:2.8px;height:1px;background:#e0d060;"></div>
<div class="t" style="left:203.1px;top:108.88999999999999px;color:#000;"><span style="font-size:5.55px;"><span class="c" style="width:3em">万体馆</span></span><span style="font-family:'Liberation Mono',monospace;font-size:5.6px;letter-spacing:-0.29px;-webkit-text-stroke:0.2px #000;">T8</span></div>
<svg style="position:absolute;left:194px;top:116px;" width="5" height="5"><rect x="0.5" y="0.5" width="4" height="4" fill="#fff" stroke="#b4b4b4" stroke-width="0.8"/><line x1="1.3" y1="2.5" x2="3.7" y2="2.5" stroke="#404040" stroke-width="0.8"/><line x1="2.5" y1="1.3" x2="2.5" y2="3.7" stroke="#404040" stroke-width="0.8"/></svg>
<div style="left:201.8px;top:116.12px;width:6.4px;height:4.9px;background:#f2ec88;border:0.5px solid #b0a040;border-bottom:0.8px solid #807020;border-right:0.8px solid #908030;"></div>
<div style="left:202.10000000000002px;top:115.52px;width:2.8px;height:1px;background:#e0d060;"></div>
<div class="t" style="left:210.4px;top:115.82px;color:#000;"><span style="font-family:'Liberation Mono',monospace;font-size:5.6px;letter-spacing:-0.29px;-webkit-text-stroke:0.2px #000;">L8-1-1&nbsp;&nbsp;</span><span style="font-size:5.55px;"><span class="c" style="width:3em">进线柜</span></span></div>
<svg style="position:absolute;left:194px;top:123px;" width="5" height="5"><rect x="0.5" y="0.5" width="4" height="4" fill="#fff" stroke="#b4b4b4" stroke-width="0.8"/><line x1="1.3" y1="2.5" x2="3.7" y2="2.5" stroke="#404040" stroke-width="0.8"/><line x1="2.5" y1="1.3" x2="2.5" y2="3.7" stroke="#404040" stroke-width="0.8"/></svg>
<div style="left:201.8px;top:123.05000000000001px;width:6.4px;height:4.9px;background:#f2ec88;border:0.5px solid #b0a040;border-bottom:0.8px solid #807020;border-right:0.8px solid #908030;"></div>
<div style="left:202.10000000000002px;top:122.45px;width:2.8px;height:1px;background:#e0d060;"></div>
<div class="t" style="left:210.4px;top:122.75px;color:#000;"><span style="font-family:'Liberation Mono',monospace;font-size:5.6px;letter-spacing:-0.29px;-webkit-text-stroke:0.2px #000;">L8-2-1&nbsp;&nbsp;</span><span style="font-size:5.55px;"><span class="c" style="width:3em">电容柜</span></span><span style="font-family:'Liberation Mono',monospace;font-size:5.6px;letter-spacing:-0.29px;-webkit-text-stroke:0.2px #000;">1</span></div>
<svg style="position:absolute;left:194px;top:130px;" width="5" height="5"><rect x="0.5" y="0.5" width="4" height="4" fill="#fff" stroke="#b4b4b4" stroke-width="0.8"/><line x1="1.3" y1="2.5" x2="3.7" y2="2.5" stroke="#404040" stroke-width="0.8"/><line x1="2.5" y1="1.3" x2="2.5" y2="3.7" stroke="#404040" stroke-width="0.8"/></svg>
<div style="left:201.8px;top:129.98px;width:6.4px;height:4.9px;background:#f2ec88;border:0.5px solid #b0a040;border-bottom:0.8px solid #807020;border-right:0.8px solid #908030;"></div>
<div style="left:202.10000000000002px;top:129.38px;width:2.8px;height:1px;background:#e0d060;"></div>
<div class="t" style="left:210.4px;top:129.67999999999998px;color:#000;"><span style="font-family:'Liberation Mono',monospace;font-size:5.6px;letter-spacing:-0.29px;-webkit-text-stroke:0.2px #000;">L8-3-1&nbsp;&nbsp;</span><span style="font-size:5.55px;"><span class="c" style="width:3em">电容柜</span></span><span style="font-family:'Liberation Mono',monospace;font-size:5.6px;letter-spacing:-0.29px;-webkit-text-stroke:0.2px #000;">2</span></div>
<svg style="position:absolute;left:194px;top:137px;" width="5" height="5"><rect x="0.5" y="0.5" width="4" height="4" fill="#fff" stroke="#b4b4b4" stroke-width="0.8"/><line x1="1.3" y1="2.5" x2="3.7" y2="2.5" stroke="#404040" stroke-width="0.8"/><line x1="2.5" y1="1.3" x2="2.5" y2="3.7" stroke="#404040" stroke-width="0.8"/></svg>
<div style="left:201.8px;top:136.91px;width:6.4px;height:4.9px;background:#f2ec88;border:0.5px solid #b0a040;border-bottom:0.8px solid #807020;border-right:0.8px solid #908030;"></div>
<div style="left:202.10000000000002px;top:136.31px;width:2.8px;height:1px;background:#e0d060;"></div>
<div class="t" style="left:210.4px;top:136.60999999999999px;color:#000;"><span style="font-family:'Liberation Mono',monospace;font-size:5.6px;letter-spacing:-0.29px;-webkit-text-stroke:0.2px #000;">L8-5-&nbsp;&nbsp;</span><span style="font-size:5.55px;"><span class="c" style="width:2em">母联</span></span></div>
<svg style="position:absolute;left:194px;top:143px;" width="5" height="5"><rect x="0.5" y="0.5" width="4" height="4" fill="#fff" stroke="#b4b4b4" stroke-width="0.8"/><line x1="1.3" y1="2.5" x2="3.7" y2="2.5" stroke="#404040" stroke-width="0.8"/><line x1="2.5" y1="1.3" x2="2.5" y2="3.7" stroke="#404040" stroke-width="0.8"/></svg>
<div style="left:201.8px;top:143.84px;width:6.4px;height:4.9px;background:#f2ec88;border:0.5px solid #b0a040;border-bottom:0.8px solid #807020;border-right:0.8px solid #908030;"></div>
<div style="left:202.10000000000002px;top:143.24px;width:2.8px;height:1px;background:#e0d060;"></div>
<div class="t" style="left:210.4px;top:143.54px;color:#000;"><span style="font-family:'Liberation Mono',monospace;font-size:5.6px;letter-spacing:-0.29px;-webkit-text-stroke:0.2px #000;">L8-6-1&nbsp;&nbsp;</span><span style="font-size:5.55px;"><span class="c" style="width:4em">普通动力</span></span><span style="font-family:'Liberation Mono',monospace;font-size:5.6px;letter-spacing:-0.29px;-webkit-text-stroke:0.2px #000;">D-1(</span></div>
<svg style="position:absolute;left:194px;top:150px;" width="5" height="5"><rect x="0.5" y="0.5" width="4" height="4" fill="#fff" stroke="#b4b4b4" stroke-width="0.8"/><line x1="1.3" y1="2.5" x2="3.7" y2="2.5" stroke="#404040" stroke-width="0.8"/><line x1="2.5" y1="1.3" x2="2.5" y2="3.7" stroke="#404040" stroke-width="0.8"/></svg>
<div style="left:201.8px;top:150.77px;width:6.4px;height:4.9px;background:#f2ec88;border:0.5px solid #b0a040;border-bottom:0.8px solid #807020;border-right:0.8px solid #908030;"></div>
<div style="left:202.10000000000002px;top:150.17000000000002px;width:2.8px;height:1px;background:#e0d060;"></div>
<div class="t" style="left:210.4px;top:150.47px;color:#000;"><span style="font-family:'Liberation Mono',monospace;font-size:5.6px;letter-spacing:-0.29px;-webkit-text-stroke:0.2px #000;">L8-6-2&nbsp;&nbsp;</span><span style="font-size:5.55px;"><span class="c" style="width:4em">普通照明</span></span><span style="font-family:'Liberation Mono',monospace;font-size:5.6px;letter-spacing:-0.29px;-webkit-text-stroke:0.2px #000;">D-B1</span></div>
<svg style="position:absolute;left:194px;top:157px;" width="5" height="5"><rect x="0.5" y="0.5" width="4" height="4" fill="#fff" stroke="#b4b4b4" stroke-width="0.8"/><line x1="1.3" y1="2.5" x2="3.7" y2="2.5" stroke="#404040" stroke-width="0.8"/><line x1="2.5" y1="1.3" x2="2.5" y2="3.7" stroke="#404040" stroke-width="0.8"/></svg>
<div style="left:201.8px;top:157.70000000000002px;width:6.4px;height:4.9px;background:#f2ec88;border:0.5px solid #b0a040;border-bottom:0.8px solid #807020;border-right:0.8px solid #908030;"></div>
<div style="left:202.10000000000002px;top:157.10000000000002px;width:2.8px;height:1px;background:#e0d060;"></div>
<div class="t" style="left:210.4px;top:157.4px;color:#000;"><span style="font-family:'Liberation Mono',monospace;font-size:5.6px;letter-spacing:-0.29px;-webkit-text-stroke:0.2px #000;">L8-6-3&nbsp;&nbsp;</span><span style="font-size:5.55px;"><span class="c" style="width:4em">普通动力</span></span><span style="font-family:'Liberation Mono',monospace;font-size:5.6px;letter-spacing:-0.29px;-webkit-text-stroke:0.2px #000;">D-B1</span></div>
<svg style="position:absolute;left:194px;top:164px;" width="5" height="5"><rect x="0.5" y="0.5" width="4" height="4" fill="#fff" stroke="#b4b4b4" stroke-width="0.8"/><line x1="1.3" y1="2.5" x2="3.7" y2="2.5" stroke="#404040" stroke-width="0.8"/><line x1="2.5" y1="1.3" x2="2.5" y2="3.7" stroke="#404040" stroke-width="0.8"/></svg>
<div style="left:201.8px;top:164.63px;width:6.4px;height:4.9px;background:#f2ec88;border:0.5px solid #b0a040;border-bottom:0.8px solid #807020;border-right:0.8px solid #908030;"></div>
<div style="left:202.10000000000002px;top:164.03px;width:2.8px;height:1px;background:#e0d060;"></div>
<div class="t" style="left:210.4px;top:164.32999999999998px;color:#000;"><span style="font-family:'Liberation Mono',monospace;font-size:5.6px;letter-spacing:-0.29px;-webkit-text-stroke:0.2px #000;">L8-6-4&nbsp;&nbsp;</span><span style="font-size:5.55px;"><span class="c" style="width:4em">普通照明</span></span><span style="font-family:'Liberation Mono',monospace;font-size:5.6px;letter-spacing:-0.29px;-webkit-text-stroke:0.2px #000;">D-B1</span></div>
<svg style="position:absolute;left:194px;top:171px;" width="5" height="5"><rect x="0.5" y="0.5" width="4" height="4" fill="#fff" stroke="#b4b4b4" stroke-width="0.8"/><line x1="1.3" y1="2.5" x2="3.7" y2="2.5" stroke="#404040" stroke-width="0.8"/><line x1="2.5" y1="1.3" x2="2.5" y2="3.7" stroke="#404040" stroke-width="0.8"/></svg>
<div style="left:201.8px;top:171.56px;width:6.4px;height:4.9px;background:#f2ec88;border:0.5px solid #b0a040;border-bottom:0.8px solid #807020;border-right:0.8px solid #908030;"></div>
<div style="left:202.10000000000002px;top:170.96px;width:2.8px;height:1px;background:#e0d060;"></div>
<div class="t" style="left:210.4px;top:171.26px;color:#000;"><span style="font-family:'Liberation Mono',monospace;font-size:5.6px;letter-spacing:-0.29px;-webkit-text-stroke:0.2px #000;">L8-6-5&nbsp;&nbsp;</span><span style="font-size:5.55px;"><span class="c" style="width:4em">普通动力</span></span><span style="font-family:'Liberation Mono',monospace;font-size:5.6px;letter-spacing:-0.29px;-webkit-text-stroke:0.2px #000;">D-B1</span></div>
<svg style="position:absolute;left:194px;top:178px;" width="5" height="5"><rect x="0.5" y="0.5" width="4" height="4" fill="#fff" stroke="#b4b4b4" stroke-width="0.8"/><line x1="1.3" y1="2.5" x2="3.7" y2="2.5" stroke="#404040" stroke-width="0.8"/><line x1="2.5" y1="1.3" x2="2.5" y2="3.7" stroke="#404040" stroke-width="0.8"/></svg>
<div style="left:201.8px;top:178.49px;width:6.4px;height:4.9px;background:#f2ec88;border:0.5px solid #b0a040;border-bottom:0.8px solid #807020;border-right:0.8px solid #908030;"></div>
<div style="left:202.10000000000002px;top:177.89000000000001px;width:2.8px;height:1px;background:#e0d060;"></div>
<div class="t" style="left:210.4px;top:178.19px;color:#000;"><span style="font-family:'Liberation Mono',monospace;font-size:5.6px;letter-spacing:-0.29px;-webkit-text-stroke:0.2px #000;">L8-6-6&nbsp;&nbsp;</span><span style="font-size:5.55px;"><span class="c" style="width:4em">普通动力</span></span><span style="font-family:'Liberation Mono',monospace;font-size:5.6px;letter-spacing:-0.29px;-webkit-text-stroke:0.2px #000;">D-1N</span></div>
<svg style="position:absolute;left:194px;top:185px;" width="5" height="5"><rect x="0.5" y="0.5" width="4" height="4" fill="#fff" stroke="#b4b4b4" stroke-width="0.8"/><line x1="1.3" y1="2.5" x2="3.7" y2="2.5" stroke="#404040" stroke-width="0.8"/><line x1="2.5" y1="1.3" x2="2.5" y2="3.7" stroke="#404040" stroke-width="0.8"/></svg>
<div style="left:201.8px;top:185.42px;width:6.4px;height:4.9px;background:#f2ec88;border:0.5px solid #b0a040;border-bottom:0.8px solid #807020;border-right:0.8px solid #908030;"></div>
<div style="left:202.10000000000002px;top:184.82px;width:2.8px;height:1px;background:#e0d060;"></div>
<div class="t" style="left:210.4px;top:185.11999999999998px;color:#000;"><span style="font-family:'Liberation Mono',monospace;font-size:5.6px;letter-spacing:-0.29px;-webkit-text-stroke:0.2px #000;">L8-6-7&nbsp;&nbsp;</span><span style="font-size:5.55px;"><span class="c" style="width:4em">普通照明</span></span><span style="font-family:'Liberation Mono',monospace;font-size:5.6px;letter-spacing:-0.29px;-webkit-text-stroke:0.2px #000;">C-2(</span></div>
<svg style="position:absolute;left:194px;top:192px;" width="5" height="5"><rect x="0.5" y="0.5" width="4" height="4" fill="#fff" stroke="#b4b4b4" stroke-width="0.8"/><line x1="1.3" y1="2.5" x2="3.7" y2="2.5" stroke="#404040" stroke-width="0.8"/><line x1="2.5" y1="1.3" x2="2.5" y2="3.7" stroke="#404040" stroke-width="0.8"/></svg>
<div style="left:201.8px;top:192.35px;width:6.4px;height:4.9px;background:#f2ec88;border:0.5px solid #b0a040;border-bottom:0.8px solid #807020;border-right:0.8px solid #908030;"></div>
<div style="left:202.10000000000002px;top:191.75px;width:2.8px;height:1px;background:#e0d060;"></div>
<div class="t" style="left:210.4px;top:192.04999999999998px;color:#000;"><span style="font-family:'Liberation Mono',monospace;font-size:5.6px;letter-spacing:-0.29px;-webkit-text-stroke:0.2px #000;">L8-6-8&nbsp;&nbsp;</span><span style="font-size:5.55px;"><span class="c" style="width:2em">备用</span></span></div>
<svg style="position:absolute;left:194px;top:199px;" width="5" height="5"><rect x="0.5" y="0.5" width="4" height="4" fill="#fff" stroke="#b4b4b4" stroke-width="0.8"/><line x1="1.3" y1="2.5" x2="3.7" y2="2.5" stroke="#404040" stroke-width="0.8"/><line x1="2.5" y1="1.3" x2="2.5" y2="3.7" stroke="#404040" stroke-width="0.8"/></svg>
<div style="left:201.8px;top:199.28px;width:6.4px;height:4.9px;background:#f2ec88;border:0.5px solid #b0a040;border-bottom:0.8px solid #807020;border-right:0.8px solid #908030;"></div>
<div style="left:202.10000000000002px;top:198.68px;width:2.8px;height:1px;background:#e0d060;"></div>
<div class="t" style="left:210.4px;top:198.98px;color:#000;"><span style="font-family:'Liberation Mono',monospace;font-size:5.6px;letter-spacing:-0.29px;-webkit-text-stroke:0.2px #000;">L8-7-1&nbsp;&nbsp;</span><span style="font-size:5.55px;"><span class="c" style="width:6em">场馆用电预留</span></span></div>
<svg style="position:absolute;left:194px;top:206px;" width="5" height="5"><rect x="0.5" y="0.5" width="4" height="4" fill="#fff" stroke="#b4b4b4" stroke-width="0.8"/><line x1="1.3" y1="2.5" x2="3.7" y2="2.5" stroke="#404040" stroke-width="0.8"/><line x1="2.5" y1="1.3" x2="2.5" y2="3.7" stroke="#404040" stroke-width="0.8"/></svg>
<div style="left:201.8px;top:206.21px;width:6.4px;height:4.9px;background:#f2ec88;border:0.5px solid #b0a040;border-bottom:0.8px solid #807020;border-right:0.8px solid #908030;"></div>
<div style="left:202.10000000000002px;top:205.61px;width:2.8px;height:1px;background:#e0d060;"></div>
<div class="t" style="left:210.4px;top:205.91px;color:#000;"><span style="font-family:'Liberation Mono',monospace;font-size:5.6px;letter-spacing:-0.29px;-webkit-text-stroke:0.2px #000;">L8-7-2&nbsp;&nbsp;</span><span style="font-size:5.55px;"><span class="c" style="width:4em">普通照明</span></span><span style="font-family:'Liberation Mono',monospace;font-size:5.6px;letter-spacing:-0.29px;-webkit-text-stroke:0.2px #000;">D-2(</span></div>
<svg style="position:absolute;left:194px;top:213px;" width="5" height="5"><rect x="0.5" y="0.5" width="4" height="4" fill="#fff" stroke="#b4b4b4" stroke-width="0.8"/><line x1="1.3" y1="2.5" x2="3.7" y2="2.5" stroke="#404040" stroke-width="0.8"/><line x1="2.5" y1="1.3" x2="2.5" y2="3.7" stroke="#404040" stroke-width="0.8"/></svg>
<div style="left:201.8px;top:213.14000000000001px;width:6.4px;height:4.9px;background:#f2ec88;border:0.5px solid #b0a040;border-bottom:0.8px solid #807020;border-right:0.8px solid #908030;"></div>
<div style="left:202.10000000000002px;top:212.54000000000002px;width:2.8px;height:1px;background:#e0d060;"></div>
<div class="t" style="left:210.4px;top:212.84px;color:#000;"><span style="font-family:'Liberation Mono',monospace;font-size:5.6px;letter-spacing:-0.29px;-webkit-text-stroke:0.2px #000;">L8-7-3&nbsp;&nbsp;</span><span style="font-size:5.55px;"><span class="c" style="width:4em">普通照明</span></span><span style="font-family:'Liberation Mono',monospace;font-size:5.6px;letter-spacing:-0.29px;-webkit-text-stroke:0.2px #000;">C-3N</span></div>
<svg style="position:absolute;left:194px;top:220px;" width="5" height="5"><rect x="0.5" y="0.5" width="4" height="4" fill="#fff" stroke="#b4b4b4" stroke-width="0.8"/><line x1="1.3" y1="2.5" x2="3.7" y2="2.5" stroke="#404040" stroke-width="0.8"/><line x1="2.5" y1="1.3" x2="2.5" y2="3.7" stroke="#404040" stroke-width="0.8"/></svg>
<div style="left:201.8px;top:220.07px;width:6.4px;height:4.9px;background:#f2ec88;border:0.5px solid #b0a040;border-bottom:0.8px solid #807020;border-right:0.8px solid #908030;"></div>
<div style="left:202.10000000000002px;top:219.47px;width:2.8px;height:1px;background:#e0d060;"></div>
<div class="t" style="left:210.4px;top:219.76999999999998px;color:#000;"><span style="font-family:'Liberation Mono',monospace;font-size:5.6px;letter-spacing:-0.29px;-webkit-text-stroke:0.2px #000;">L8-7-4&nbsp;&nbsp;</span><span style="font-size:5.55px;"><span class="c" style="width:4em">普通照明</span></span><span style="font-family:'Liberation Mono',monospace;font-size:5.6px;letter-spacing:-0.29px;-webkit-text-stroke:0.2px #000;">C-3(</span></div>
<svg style="position:absolute;left:194px;top:227px;" width="5" height="5"><rect x="0.5" y="0.5" width="4" height="4" fill="#fff" stroke="#b4b4b4" stroke-width="0.8"/><line x1="1.3" y1="2.5" x2="3.7" y2="2.5" stroke="#404040" stroke-width="0.8"/><line x1="2.5" y1="1.3" x2="2.5" y2="3.7" stroke="#404040" stroke-width="0.8"/></svg>
<div style="left:201.8px;top:227.0px;width:6.4px;height:4.9px;background:#f2ec88;border:0.5px solid #b0a040;border-bottom:0.8px solid #807020;border-right:0.8px solid #908030;"></div>
<div style="left:202.10000000000002px;top:226.4px;width:2.8px;height:1px;background:#e0d060;"></div>
<div class="t" style="left:210.4px;top:226.7px;color:#000;"><span style="font-family:'Liberation Mono',monospace;font-size:5.6px;letter-spacing:-0.29px;-webkit-text-stroke:0.2px #000;">L8-7-5&nbsp;&nbsp;</span><span style="font-size:5.55px;"><span class="c" style="width:4em">重要负荷</span></span><span style="font-family:'Liberation Mono',monospace;font-size:5.6px;letter-spacing:-0.29px;-webkit-text-stroke:0.2px #000;">C-3(</span></div>
<svg style="position:absolute;left:194px;top:234px;" width="5" height="5"><rect x="0.5" y="0.5" width="4" height="4" fill="#fff" stroke="#b4b4b4" stroke-width="0.8"/><line x1="1.3" y1="2.5" x2="3.7" y2="2.5" stroke="#404040" stroke-width="0.8"/><line x1="2.5" y1="1.3" x2="2.5" y2="3.7" stroke="#404040" stroke-width="0.8"/></svg>
<div style="left:201.8px;top:233.93px;width:6.4px;height:4.9px;background:#f2ec88;border:0.5px solid #b0a040;border-bottom:0.8px solid #807020;border-right:0.8px solid #908030;"></div>
<div style="left:202.10000000000002px;top:233.33px;width:2.8px;height:1px;background:#e0d060;"></div>
<div class="t" style="left:210.4px;top:233.63px;color:#000;"><span style="font-family:'Liberation Mono',monospace;font-size:5.6px;letter-spacing:-0.29px;-webkit-text-stroke:0.2px #000;">L8-7-6&nbsp;&nbsp;</span><span style="font-size:5.55px;"><span class="c" style="width:2em">备用</span></span></div>
<svg style="position:absolute;left:194px;top:240px;" width="5" height="5"><rect x="0.5" y="0.5" width="4" height="4" fill="#fff" stroke="#b4b4b4" stroke-width="0.8"/><line x1="1.3" y1="2.5" x2="3.7" y2="2.5" stroke="#404040" stroke-width="0.8"/><line x1="2.5" y1="1.3" x2="2.5" y2="3.7" stroke="#404040" stroke-width="0.8"/></svg>
<div style="left:201.8px;top:240.85999999999999px;width:6.4px;height:4.9px;background:#f2ec88;border:0.5px solid #b0a040;border-bottom:0.8px solid #807020;border-right:0.8px solid #908030;"></div>
<div style="left:202.10000000000002px;top:240.26px;width:2.8px;height:1px;background:#e0d060;"></div>
<div class="t" style="left:210.4px;top:240.55999999999997px;color:#000;"><span style="font-family:'Liberation Mono',monospace;font-size:5.6px;letter-spacing:-0.29px;-webkit-text-stroke:0.2px #000;">L8-7-7&nbsp;&nbsp;</span><span style="font-size:5.55px;"><span class="c" style="width:2em">备用</span></span></div>
<svg style="position:absolute;left:194px;top:247px;" width="5" height="5"><rect x="0.5" y="0.5" width="4" height="4" fill="#fff" stroke="#b4b4b4" stroke-width="0.8"/><line x1="1.3" y1="2.5" x2="3.7" y2="2.5" stroke="#404040" stroke-width="0.8"/><line x1="2.5" y1="1.3" x2="2.5" y2="3.7" stroke="#404040" stroke-width="0.8"/></svg>
<div style="left:201.8px;top:247.79px;width:6.4px;height:4.9px;background:#f2ec88;border:0.5px solid #b0a040;border-bottom:0.8px solid #807020;border-right:0.8px solid #908030;"></div>
<div style="left:202.10000000000002px;top:247.19px;width:2.8px;height:1px;background:#e0d060;"></div>
<div class="t" style="left:210.4px;top:247.48999999999998px;color:#000;"><span style="font-family:'Liberation Mono',monospace;font-size:5.6px;letter-spacing:-0.29px;-webkit-text-stroke:0.2px #000;">L8-7-8&nbsp;&nbsp;</span><span style="font-size:5.55px;"><span class="c" style="width:2em">备用</span></span></div>
<svg style="position:absolute;left:194px;top:254px;" width="5" height="5"><rect x="0.5" y="0.5" width="4" height="4" fill="#fff" stroke="#b4b4b4" stroke-width="0.8"/><line x1="1.3" y1="2.5" x2="3.7" y2="2.5" stroke="#404040" stroke-width="0.8"/><line x1="2.5" y1="1.3" x2="2.5" y2="3.7" stroke="#404040" stroke-width="0.8"/></svg>
<div style="left:201.8px;top:254.72px;width:6.4px;height:4.9px;background:#f2ec88;border:0.5px solid #b0a040;border-bottom:0.8px solid #807020;border-right:0.8px solid #908030;"></div>
<div style="left:202.10000000000002px;top:254.12px;width:2.8px;height:1px;background:#e0d060;"></div>
<div class="t" style="left:210.4px;top:254.42px;color:#000;"><span style="font-family:'Liberation Mono',monospace;font-size:5.6px;letter-spacing:-0.29px;-webkit-text-stroke:0.2px #000;">L8-8-1&nbsp;&nbsp;</span><span style="font-size:5.55px;"><span class="c" style="width:2em">备用</span></span></div>
<svg style="position:absolute;left:194px;top:261px;" width="5" height="5"><rect x="0.5" y="0.5" width="4" height="4" fill="#fff" stroke="#b4b4b4" stroke-width="0.8"/><line x1="1.3" y1="2.5" x2="3.7" y2="2.5" stroke="#404040" stroke-width="0.8"/><line x1="2.5" y1="1.3" x2="2.5" y2="3.7" stroke="#404040" stroke-width="0.8"/></svg>
<div style="left:201.8px;top:261.65px;width:6.4px;height:4.9px;background:#f2ec88;border:0.5px solid #b0a040;border-bottom:0.8px solid #807020;border-right:0.8px solid #908030;"></div>
<div style="left:202.10000000000002px;top:261.05px;width:2.8px;height:1px;background:#e0d060;"></div>
<div class="t" style="left:210.4px;top:261.35px;color:#000;"><span style="font-family:'Liberation Mono',monospace;font-size:5.6px;letter-spacing:-0.29px;-webkit-text-stroke:0.2px #000;">L8-8-2&nbsp;&nbsp;</span><span style="font-size:5.55px;"><span class="c" style="width:2em">备用</span></span></div>
<svg style="position:absolute;left:194px;top:268px;" width="5" height="5"><rect x="0.5" y="0.5" width="4" height="4" fill="#fff" stroke="#b4b4b4" stroke-width="0.8"/><line x1="1.3" y1="2.5" x2="3.7" y2="2.5" stroke="#404040" stroke-width="0.8"/><line x1="2.5" y1="1.3" x2="2.5" y2="3.7" stroke="#404040" stroke-width="0.8"/></svg>
<div style="left:201.8px;top:268.58px;width:6.4px;height:4.9px;background:#f2ec88;border:0.5px solid #b0a040;border-bottom:0.8px solid #807020;border-right:0.8px solid #908030;"></div>
<div style="left:202.10000000000002px;top:267.98px;width:2.8px;height:1px;background:#e0d060;"></div>
<div class="t" style="left:210.4px;top:268.28000000000003px;color:#000;"><span style="font-family:'Liberation Mono',monospace;font-size:5.6px;letter-spacing:-0.29px;-webkit-text-stroke:0.2px #000;">L8-8-3&nbsp;&nbsp;</span><span style="font-size:5.55px;"><span class="c" style="width:2em">备用</span></span></div>
<svg style="position:absolute;left:194px;top:275px;" width="5" height="5"><rect x="0.5" y="0.5" width="4" height="4" fill="#fff" stroke="#b4b4b4" stroke-width="0.8"/><line x1="1.3" y1="2.5" x2="3.7" y2="2.5" stroke="#404040" stroke-width="0.8"/><line x1="2.5" y1="1.3" x2="2.5" y2="3.7" stroke="#404040" stroke-width="0.8"/></svg>
<div style="left:201.8px;top:275.51px;width:6.4px;height:4.9px;background:#f2ec88;border:0.5px solid #b0a040;border-bottom:0.8px solid #807020;border-right:0.8px solid #908030;"></div>
<div style="left:202.10000000000002px;top:274.91px;width:2.8px;height:1px;background:#e0d060;"></div>
<div class="t" style="left:210.4px;top:275.21000000000004px;color:#000;"><span style="font-family:'Liberation Mono',monospace;font-size:5.6px;letter-spacing:-0.29px;-webkit-text-stroke:0.2px #000;">L8-8-4&nbsp;&nbsp;</span><span style="font-size:5.55px;"><span class="c" style="width:2em">备用</span></span></div>
<svg style="position:absolute;left:194px;top:282px;" width="5" height="5"><rect x="0.5" y="0.5" width="4" height="4" fill="#fff" stroke="#b4b4b4" stroke-width="0.8"/><line x1="1.3" y1="2.5" x2="3.7" y2="2.5" stroke="#404040" stroke-width="0.8"/><line x1="2.5" y1="1.3" x2="2.5" y2="3.7" stroke="#404040" stroke-width="0.8"/></svg>
<div style="left:201.8px;top:282.43999999999994px;width:6.4px;height:4.9px;background:#f2ec88;border:0.5px solid #b0a040;border-bottom:0.8px solid #807020;border-right:0.8px solid #908030;"></div>
<div style="left:202.10000000000002px;top:281.84px;width:2.8px;height:1px;background:#e0d060;"></div>
<div class="t" style="left:210.4px;top:282.14px;color:#000;"><span style="font-family:'Liberation Mono',monospace;font-size:5.6px;letter-spacing:-0.29px;-webkit-text-stroke:0.2px #000;">L8-8-5&nbsp;&nbsp;</span><span style="font-size:5.55px;"><span class="c" style="width:6em">泛光照明配电</span></span></div>
<svg style="position:absolute;left:194px;top:289px;" width="5" height="5"><rect x="0.5" y="0.5" width="4" height="4" fill="#fff" stroke="#b4b4b4" stroke-width="0.8"/><line x1="1.3" y1="2.5" x2="3.7" y2="2.5" stroke="#404040" stroke-width="0.8"/><line x1="2.5" y1="1.3" x2="2.5" y2="3.7" stroke="#404040" stroke-width="0.8"/></svg>
<div style="left:201.8px;top:289.37px;width:6.4px;height:4.9px;background:#f2ec88;border:0.5px solid #b0a040;border-bottom:0.8px solid #807020;border-right:0.8px solid #908030;"></div>
<div style="left:202.10000000000002px;top:288.77000000000004px;width:2.8px;height:1px;background:#e0d060;"></div>
<div class="t" style="left:210.4px;top:289.07000000000005px;color:#000;"><span style="font-family:'Liberation Mono',monospace;font-size:5.6px;letter-spacing:-0.29px;-webkit-text-stroke:0.2px #000;">L8-8-6&nbsp;&nbsp;</span><span style="font-size:5.55px;"><span class="c" style="width:6em">泛光照明配电</span></span></div>
<svg style="position:absolute;left:194px;top:296px;" width="5" height="5"><rect x="0.5" y="0.5" width="4" height="4" fill="#fff" stroke="#b4b4b4" stroke-width="0.8"/><line x1="1.3" y1="2.5" x2="3.7" y2="2.5" stroke="#404040" stroke-width="0.8"/><line x1="2.5" y1="1.3" x2="2.5" y2="3.7" stroke="#404040" stroke-width="0.8"/></svg>
<div style="left:201.8px;top:296.29999999999995px;width:6.4px;height:4.9px;background:#f2ec88;border:0.5px solid #b0a040;border-bottom:0.8px solid #807020;border-right:0.8px solid #908030;"></div>
<div style="left:202.10000000000002px;top:295.7px;width:2.8px;height:1px;background:#e0d060;"></div>
<div class="t" style="left:210.4px;top:296.0px;color:#000;"><span style="font-family:'Liberation Mono',monospace;font-size:5.6px;letter-spacing:-0.29px;-webkit-text-stroke:0.2px #000;">L8-8-7&nbsp;&nbsp;</span><span style="font-size:5.55px;"><span class="c" style="width:2em">备用</span></span></div>
<svg style="position:absolute;left:194px;top:303px;" width="5" height="5"><rect x="0.5" y="0.5" width="4" height="4" fill="#fff" stroke="#b4b4b4" stroke-width="0.8"/><line x1="1.3" y1="2.5" x2="3.7" y2="2.5" stroke="#404040" stroke-width="0.8"/><line x1="2.5" y1="1.3" x2="2.5" y2="3.7" stroke="#404040" stroke-width="0.8"/></svg>
<div style="left:201.8px;top:303.22999999999996px;width:6.4px;height:4.9px;background:#f2ec88;border:0.5px solid #b0a040;border-bottom:0.8px solid #807020;border-right:0.8px solid #908030;"></div>
<div style="left:202.10000000000002px;top:302.63px;width:2.8px;height:1px;background:#e0d060;"></div>
<div class="t" style="left:210.4px;top:302.93px;color:#000;"><span style="font-family:'Liberation Mono',monospace;font-size:5.6px;letter-spacing:-0.29px;-webkit-text-stroke:0.2px #000;">L8-8-8&nbsp;&nbsp;</span><span style="font-size:5.55px;"><span class="c" style="width:2em">备用</span></span></div>
<svg style="position:absolute;left:194px;top:310px;" width="5" height="5"><rect x="0.5" y="0.5" width="4" height="4" fill="#fff" stroke="#b4b4b4" stroke-width="0.8"/><line x1="1.3" y1="2.5" x2="3.7" y2="2.5" stroke="#404040" stroke-width="0.8"/><line x1="2.5" y1="1.3" x2="2.5" y2="3.7" stroke="#404040" stroke-width="0.8"/></svg>
<div style="left:201.8px;top:310.15999999999997px;width:6.4px;height:4.9px;background:#f2ec88;border:0.5px solid #b0a040;border-bottom:0.8px solid #807020;border-right:0.8px solid #908030;"></div>
<div style="left:202.10000000000002px;top:309.56px;width:2.8px;height:1px;background:#e0d060;"></div>
<div class="t" style="left:210.4px;top:309.86px;color:#000;"><span style="font-family:'Liberation Mono',monospace;font-size:5.6px;letter-spacing:-0.29px;-webkit-text-stroke:0.2px #000;">L8-9-1&nbsp;&nbsp;</span><span style="font-size:5.55px;"><span class="c" style="width:4em">重要负荷</span></span><span style="font-family:'Liberation Mono',monospace;font-size:5.6px;letter-spacing:-0.29px;-webkit-text-stroke:0.2px #000;">D-B1</span></div>
<svg style="position:absolute;left:194px;top:317px;" width="5" height="5"><rect x="0.5" y="0.5" width="4" height="4" fill="#fff" stroke="#b4b4b4" stroke-width="0.8"/><line x1="1.3" y1="2.5" x2="3.7" y2="2.5" stroke="#404040" stroke-width="0.8"/><line x1="2.5" y1="1.3" x2="2.5" y2="3.7" stroke="#404040" stroke-width="0.8"/></svg>
<div style="left:201.8px;top:317.09px;width:6.4px;height:4.9px;background:#f2ec88;border:0.5px solid #b0a040;border-bottom:0.8px solid #807020;border-right:0.8px solid #908030;"></div>
<div style="left:202.10000000000002px;top:316.49px;width:2.8px;height:1px;background:#e0d060;"></div>
<div class="t" style="left:210.4px;top:316.79px;color:#000;"><span style="font-family:'Liberation Mono',monospace;font-size:5.6px;letter-spacing:-0.29px;-webkit-text-stroke:0.2px #000;">L8-9-2&nbsp;&nbsp;</span><span style="font-size:5.55px;"><span class="c" style="width:4em">重要负荷</span></span><span style="font-family:'Liberation Mono',monospace;font-size:5.6px;letter-spacing:-0.29px;-webkit-text-stroke:0.2px #000;">D-B1</span></div>
<svg style="position:absolute;left:194px;top:324px;" width="5" height="5"><rect x="0.5" y="0.5" width="4" height="4" fill="#fff" stroke="#b4b4b4" stroke-width="0.8"/><line x1="1.3" y1="2.5" x2="3.7" y2="2.5" stroke="#404040" stroke-width="0.8"/><line x1="2.5" y1="1.3" x2="2.5" y2="3.7" stroke="#404040" stroke-width="0.8"/></svg>
<div style="left:201.8px;top:324.02px;width:6.4px;height:4.9px;background:#f2ec88;border:0.5px solid #b0a040;border-bottom:0.8px solid #807020;border-right:0.8px solid #908030;"></div>
<div style="left:202.10000000000002px;top:323.42px;width:2.8px;height:1px;background:#e0d060;"></div>
<div class="t" style="left:210.4px;top:323.72px;color:#000;"><span style="font-family:'Liberation Mono',monospace;font-size:5.6px;letter-spacing:-0.29px;-webkit-text-stroke:0.2px #000;">L8-9-3&nbsp;&nbsp;</span><span style="font-size:5.55px;"><span class="c" style="width:2em">备用</span></span></div>
<svg style="position:absolute;left:194px;top:331px;" width="5" height="5"><rect x="0.5" y="0.5" width="4" height="4" fill="#fff" stroke="#b4b4b4" stroke-width="0.8"/><line x1="1.3" y1="2.5" x2="3.7" y2="2.5" stroke="#404040" stroke-width="0.8"/><line x1="2.5" y1="1.3" x2="2.5" y2="3.7" stroke="#404040" stroke-width="0.8"/></svg>
<div style="left:201.8px;top:330.94999999999993px;width:6.4px;height:4.9px;background:#f2ec88;border:0.5px solid #b0a040;border-bottom:0.8px solid #807020;border-right:0.8px solid #908030;"></div>
<div style="left:202.10000000000002px;top:330.34999999999997px;width:2.8px;height:1px;background:#e0d060;"></div>
<div class="t" style="left:210.4px;top:330.65px;color:#000;"><span style="font-family:'Liberation Mono',monospace;font-size:5.6px;letter-spacing:-0.29px;-webkit-text-stroke:0.2px #000;">L8-9-4&nbsp;&nbsp;</span><span style="font-size:5.55px;"><span class="c" style="width:4em">重要负荷</span></span><span style="font-family:'Liberation Mono',monospace;font-size:5.6px;letter-spacing:-0.29px;-webkit-text-stroke:0.2px #000;">D-B1</span></div>
<svg style="position:absolute;left:194px;top:337px;" width="5" height="5"><rect x="0.5" y="0.5" width="4" height="4" fill="#fff" stroke="#b4b4b4" stroke-width="0.8"/><line x1="1.3" y1="2.5" x2="3.7" y2="2.5" stroke="#404040" stroke-width="0.8"/><line x1="2.5" y1="1.3" x2="2.5" y2="3.7" stroke="#404040" stroke-width="0.8"/></svg>
<div style="left:201.8px;top:337.88px;width:6.4px;height:4.9px;background:#f2ec88;border:0.5px solid #b0a040;border-bottom:0.8px solid #807020;border-right:0.8px solid #908030;"></div>
<div style="left:202.10000000000002px;top:337.28000000000003px;width:2.8px;height:1px;background:#e0d060;"></div>
<div class="t" style="left:210.4px;top:337.58000000000004px;color:#000;"><span style="font-family:'Liberation Mono',monospace;font-size:5.6px;letter-spacing:-0.29px;-webkit-text-stroke:0.2px #000;">L8-9-5&nbsp;&nbsp;</span><span style="font-size:5.55px;"><span class="c" style="width:4em">重要负荷</span></span><span style="font-family:'Liberation Mono',monospace;font-size:5.6px;letter-spacing:-0.29px;-webkit-text-stroke:0.2px #000;">D-B1</span></div>
<svg style="position:absolute;left:194px;top:344px;" width="5" height="5"><rect x="0.5" y="0.5" width="4" height="4" fill="#fff" stroke="#b4b4b4" stroke-width="0.8"/><line x1="1.3" y1="2.5" x2="3.7" y2="2.5" stroke="#404040" stroke-width="0.8"/><line x1="2.5" y1="1.3" x2="2.5" y2="3.7" stroke="#404040" stroke-width="0.8"/></svg>
<div style="left:201.8px;top:344.80999999999995px;width:6.4px;height:4.9px;background:#f2ec88;border:0.5px solid #b0a040;border-bottom:0.8px solid #807020;border-right:0.8px solid #908030;"></div>
<div style="left:202.10000000000002px;top:344.21px;width:2.8px;height:1px;background:#e0d060;"></div>
<div class="t" style="left:210.4px;top:344.51px;color:#000;"><span style="font-family:'Liberation Mono',monospace;font-size:5.6px;letter-spacing:-0.29px;-webkit-text-stroke:0.2px #000;">L8-9-6&nbsp;&nbsp;</span><span style="font-size:5.55px;"><span class="c" style="width:4em">重要负荷</span></span><span style="font-family:'Liberation Mono',monospace;font-size:5.6px;letter-spacing:-0.29px;-webkit-text-stroke:0.2px #000;">D-1(</span></div>
<svg style="position:absolute;left:194px;top:351px;" width="5" height="5"><rect x="0.5" y="0.5" width="4" height="4" fill="#fff" stroke="#b4b4b4" stroke-width="0.8"/><line x1="1.3" y1="2.5" x2="3.7" y2="2.5" stroke="#404040" stroke-width="0.8"/><line x1="2.5" y1="1.3" x2="2.5" y2="3.7" stroke="#404040" stroke-width="0.8"/></svg>
<div style="left:201.8px;top:351.73999999999995px;width:6.4px;height:4.9px;background:#f2ec88;border:0.5px solid #b0a040;border-bottom:0.8px solid #807020;border-right:0.8px solid #908030;"></div>
<div style="left:202.10000000000002px;top:351.14px;width:2.8px;height:1px;background:#e0d060;"></div>
<div class="t" style="left:210.4px;top:351.44px;color:#000;"><span style="font-family:'Liberation Mono',monospace;font-size:5.6px;letter-spacing:-0.29px;-webkit-text-stroke:0.2px #000;">L8-9-7&nbsp;&nbsp;</span><span style="font-size:5.55px;"><span class="c" style="width:4em">重要负荷</span></span><span style="font-family:'Liberation Mono',monospace;font-size:5.6px;letter-spacing:-0.29px;-webkit-text-stroke:0.2px #000;">D-1(</span></div>
<svg style="position:absolute;left:194px;top:358px;" width="5" height="5"><rect x="0.5" y="0.5" width="4" height="4" fill="#fff" stroke="#b4b4b4" stroke-width="0.8"/><line x1="1.3" y1="2.5" x2="3.7" y2="2.5" stroke="#404040" stroke-width="0.8"/><line x1="2.5" y1="1.3" x2="2.5" y2="3.7" stroke="#404040" stroke-width="0.8"/></svg>
<div style="left:201.8px;top:358.66999999999996px;width:6.4px;height:4.9px;background:#f2ec88;border:0.5px solid #b0a040;border-bottom:0.8px solid #807020;border-right:0.8px solid #908030;"></div>
<div style="left:202.10000000000002px;top:358.07px;width:2.8px;height:1px;background:#e0d060;"></div>
<div class="t" style="left:210.4px;top:358.37px;color:#000;"><span style="font-family:'Liberation Mono',monospace;font-size:5.6px;letter-spacing:-0.29px;-webkit-text-stroke:0.2px #000;">L8-10-1&nbsp;&nbsp;</span><span style="font-size:5.55px;"><span class="c" style="width:5em">消防应急照</span></span></div>
<svg style="position:absolute;left:194px;top:365px;" width="5" height="5"><rect x="0.5" y="0.5" width="4" height="4" fill="#fff" stroke="#b4b4b4" stroke-width="0.8"/><line x1="1.3" y1="2.5" x2="3.7" y2="2.5" stroke="#404040" stroke-width="0.8"/><line x1="2.5" y1="1.3" x2="2.5" y2="3.7" stroke="#404040" stroke-width="0.8"/></svg>
<div style="left:201.8px;top:365.59999999999997px;width:6.4px;height:4.9px;background:#f2ec88;border:0.5px solid #b0a040;border-bottom:0.8px solid #807020;border-right:0.8px solid #908030;"></div>
<div style="left:202.10000000000002px;top:365.0px;width:2.8px;height:1px;background:#e0d060;"></div>
<div class="t" style="left:210.4px;top:365.3px;color:#000;"><span style="font-family:'Liberation Mono',monospace;font-size:5.6px;letter-spacing:-0.29px;-webkit-text-stroke:0.2px #000;">L8-10-2&nbsp;&nbsp;</span><span style="font-size:5.55px;"><span class="c" style="width:5em">消防应急照</span></span></div>
<svg style="position:absolute;left:194px;top:372px;" width="5" height="5"><rect x="0.5" y="0.5" width="4" height="4" fill="#fff" stroke="#b4b4b4" stroke-width="0.8"/><line x1="1.3" y1="2.5" x2="3.7" y2="2.5" stroke="#404040" stroke-width="0.8"/><line x1="2.5" y1="1.3" x2="2.5" y2="3.7" stroke="#404040" stroke-width="0.8"/></svg>
<div style="left:201.8px;top:372.53px;width:6.4px;height:4.9px;background:#f2ec88;border:0.5px solid #b0a040;border-bottom:0.8px solid #807020;border-right:0.8px solid #908030;"></div>
<div style="left:202.10000000000002px;top:371.93px;width:2.8px;height:1px;background:#e0d060;"></div>
<div class="t" style="left:210.4px;top:372.23px;color:#000;"><span style="font-family:'Liberation Mono',monospace;font-size:5.6px;letter-spacing:-0.29px;-webkit-text-stroke:0.2px #000;">L8-10-3&nbsp;&nbsp;</span><span style="font-size:5.55px;"><span class="c" style="width:5em">消防应急照</span></span></div>
<svg style="position:absolute;left:194px;top:379px;" width="5" height="5"><rect x="0.5" y="0.5" width="4" height="4" fill="#fff" stroke="#b4b4b4" stroke-width="0.8"/><line x1="1.3" y1="2.5" x2="3.7" y2="2.5" stroke="#404040" stroke-width="0.8"/><line x1="2.5" y1="1.3" x2="2.5" y2="3.7" stroke="#404040" stroke-width="0.8"/></svg>
<div style="left:201.8px;top:379.46px;width:6.4px;height:4.9px;background:#f2ec88;border:0.5px solid #b0a040;border-bottom:0.8px solid #807020;border-right:0.8px solid #908030;"></div>
<div style="left:202.10000000000002px;top:378.86px;width:2.8px;height:1px;background:#e0d060;"></div>
<div class="t" style="left:210.4px;top:379.16px;color:#000;"><span style="font-family:'Liberation Mono',monospace;font-size:5.6px;letter-spacing:-0.29px;-webkit-text-stroke:0.2px #000;">L8-10-4&nbsp;&nbsp;</span><span style="font-size:5.55px;"><span class="c" style="width:5em">消防应急照</span></span></div>
</div>
<div style="left:282.4px;top:92.4px;width:79.20000000000005px;height:29.099999999999994px;border:0.6px solid #d4d4d4;box-shadow:inset 0.5px 0.5px 0 #fff;"></div>
<div style="left:285.4px;top:89.4px;width:24px;height:6px;background:#f0f0f0;"></div>
<div class="t" style="left:286.2px;top:89.80000000000001px;font-size:5.4px;color:#202020;"><span class="c" style="width:4em">曲线时间</span></div>
<div style="left:282.4px;top:125.5px;width:79.20000000000005px;height:24.599999999999994px;border:0.6px solid #d4d4d4;box-shadow:inset 0.5px 0.5px 0 #fff;"></div>
<div style="left:285.4px;top:122.5px;width:24px;height:6px;background:#f0f0f0;"></div>
<div class="t" style="left:286.2px;top:122.9px;font-size:5.4px;color:#202020;"><span class="c" style="width:4em">显示方式</span></div>
<div style="left:366.2px;top:92.5px;width:282.40000000000003px;height:66.5px;border:0.6px solid #d4d4d4;box-shadow:inset 0.5px 0.5px 0 #fff;"></div>
<div style="left:369.2px;top:89.5px;width:24px;height:6px;background:#f0f0f0;"></div>
<div class="t" style="left:370.0px;top:89.9px;font-size:5.4px;color:#202020;"><span class="c" style="width:4em">曲线属性</span></div>
<div class="t" style="left:286.2px;top:99.1px;font-size:5.6px;color:#202020;"><span class="c" style="width:4em">起始日期</span>:</div>
<div class="t" style="left:286.2px;top:111.8px;font-size:5.6px;color:#202020;"><span class="c" style="width:4em">结束日期</span>:</div>
<div style="left:313.9px;top:97.7px;width:45.1px;height:7px;background:#fff;border:0.5px solid #b4b4b4;"></div>
<div class="t" style="left:315.3px;top:98.7px;font-size:5.3px;color:#303030;">2022<span class="c" style="width:1em">年</span>&nbsp;&nbsp;7<span class="c" style="width:1em">月</span>&nbsp;&nbsp;6</div>
<div style="left:352.6px;top:98.9px;width:5.3px;height:4.8px;background:#f4f4f4;border:0.4px solid #c8c8c8;"></div>
<svg style="position:absolute;left:353.9px;top:100.60000000000001px;" width="3" height="2"><path d="M0.2 0.3 L1.4 1.6 L2.6 0.3Z" fill="#333"/></svg>
<div style="left:313.9px;top:110.9px;width:45.1px;height:7px;background:#fff;border:0.5px solid #b4b4b4;"></div>
<div class="t" style="left:315.3px;top:111.9px;font-size:5.3px;color:#303030;">2022<span class="c" style="width:1em">年</span>&nbsp;&nbsp;7<span class="c" style="width:1em">月</span>&nbsp;&nbsp;6</div>
<div style="left:352.6px;top:112.10000000000001px;width:5.3px;height:4.8px;background:#f4f4f4;border:0.4px solid #c8c8c8;"></div>
<svg style="position:absolute;left:353.9px;top:113.80000000000001px;" width="3" height="2"><path d="M0.2 0.3 L1.4 1.6 L2.6 0.3Z" fill="#333"/></svg>
<div class="t" style="left:286.2px;top:131.9px;font-size:5.6px;color:#202020;"><span class="c" style="width:4em">取值周期</span>:</div>
<div style="left:320.8px;top:130px;width:27.7px;height:7.4px;background:#fff;border:0.5px solid #b4b4b4;"></div>
<div class="t" style="left:322.3px;top:131.2px;font-size:5.5px;color:#202020;">05<span class="c" style="width:2em">分钟</span></div>
<div style="left:342.2px;top:130.7px;width:5.6px;height:6.0px;background:#f0f0f0;border:0.4px solid #c8c8c8;"></div>
<svg style="position:absolute;left:343.6px;top:132.8px;" width="3" height="2"><path d="M0.2 0.3 L1.4 1.6 L2.6 0.3Z" fill="#222"/></svg>
<div style="left:285.7px;top:141.9px;width:4.5px;height:4.6px;background:#fff;border:0.5px solid #b0b0b0;"></div>
<svg style="position:absolute;left:285.7px;top:141.9px;" width="5" height="5"><path d="M1 2.4 L2 3.4 L3.7 1.2" fill="none" stroke="#333" stroke-width="0.6"/></svg>
<div class="t" style="left:293.5px;top:141.5px;font-size:5.6px;color:#202020;"><span class="c" style="width:4em">鼠标捕捉</span></div>
<div style="left:321.2px;top:141.9px;width:4.5px;height:4.6px;background:#fff;border:0.5px solid #b0b0b0;"></div>
<div class="t" style="left:328.5px;top:141.5px;font-size:5.6px;color:#202020;"><span class="c" style="width:4em">显示最值</span></div>
<div style="left:282.9px;top:152px;width:24.600000000000023px;height:8.1px;background:#e9e9e9;border:0.5px solid #fbfbfb;border-right:0.6px solid #c8c8c8;border-bottom:0.6px solid #c0c0c0;"></div>
<div class="t" style="left:282.9px;top:153.4px;width:24.600000000000023px;text-align:center;font-size:5.6px;color:#202020;"><span class="c" style="width:2em">查询</span></div>
<div style="left:307.5px;top:152px;width:25.5px;height:8.1px;background:#e9e9e9;border:0.5px solid #fbfbfb;border-right:0.6px solid #c8c8c8;border-bottom:0.6px solid #c0c0c0;"></div>
<div class="t" style="left:307.5px;top:153.4px;width:25.5px;text-align:center;font-size:5.6px;color:#202020;"><span class="c" style="width:2em">关闭</span></div>
<div style="left:333px;top:152px;width:26.399999999999977px;height:8.1px;background:#e9e9e9;border:0.5px solid #fbfbfb;border-right:0.6px solid #c8c8c8;border-bottom:0.6px solid #c0c0c0;"></div>
<div class="t" style="left:333px;top:153.4px;width:26.399999999999977px;text-align:center;font-size:5.6px;color:#202020;"><span class="c" style="width:2em">打印</span></div>
<div style="left:366.7px;top:97.7px;width:281.3px;height:59px;background:#fff;border:0.5px solid #d0d0d0;border-left:0.8px solid #9a9a9a;"></div>
<div style="left:367px;top:97.9px;width:280.8px;height:7.4px;background:#fff;border-top:0.8px solid #9a9a9a;border-bottom:1px solid #9a9a9a;"></div>
<div class="t" style="left:368.7px;top:98.6px;font-size:5.8px;color:#000;"><span class="c" style="width:3em">索引号</span></div>
<div style="left:392.0px;top:98.5px;width:0.8px;height:6.5px;background:#a8a8a8;"></div>
<div style="left:392.09999999999997px;top:105.2px;width:0.5px;height:45.5px;background:#ececec;"></div>
<div class="t" style="left:394.4px;top:98.6px;font-size:5.8px;color:#000;"><span class="c" style="width:2em">颜色</span></div>
<div style="left:409.3px;top:98.5px;width:0.8px;height:6.5px;background:#a8a8a8;"></div>
<div style="left:409.4px;top:105.2px;width:0.5px;height:45.5px;background:#ececec;"></div>
<div class="t" style="left:411.7px;top:98.6px;font-size:5.8px;color:#000;"><span class="c" style="width:3em">厂站名</span></div>
<div style="left:461.20000000000005px;top:98.5px;width:0.8px;height:6.5px;background:#a8a8a8;"></div>
<div style="left:461.3px;top:105.2px;width:0.5px;height:45.5px;background:#ececec;"></div>
<div class="t" style="left:463.6px;top:98.6px;font-size:5.8px;color:#000;"><span class="c" style="width:3em">设备名</span></div>
<div style="left:513.2px;top:98.5px;width:0.8px;height:6.5px;background:#a8a8a8;"></div>
<div style="left:513.3000000000001px;top:105.2px;width:0.5px;height:45.5px;background:#ececec;"></div>
<div class="t" style="left:515.6px;top:98.6px;font-size:5.8px;color:#000;"><span class="c" style="width:3em">曲线名</span></div>
<div style="left:565.1px;top:98.5px;width:0.8px;height:6.5px;background:#a8a8a8;"></div>
<div style="left:565.2px;top:105.2px;width:0.5px;height:45.5px;background:#ececec;"></div>
<div class="t" style="left:567.5px;top:98.6px;font-size:5.8px;color:#000;"><span class="c" style="width:3em">最大值</span></div>
<div style="left:591.1px;top:98.5px;width:0.8px;height:6.5px;background:#a8a8a8;"></div>
<div style="left:591.2px;top:105.2px;width:0.5px;height:45.5px;background:#ececec;"></div>
<div class="t" style="left:593.5px;top:98.6px;font-size:5.8px;color:#000;"><span class="c" style="width:4em">发生时间</span></div>
<div style="left:367px;top:113.0px;width:280.5px;height:0.5px;background:#ececec;"></div>
<div style="left:367px;top:120.4px;width:280.5px;height:0.5px;background:#ececec;"></div>
<div style="left:367px;top:127.8px;width:280.5px;height:0.5px;background:#ececec;"></div>
<div style="left:367px;top:135.2px;width:280.5px;height:0.5px;background:#ececec;"></div>
<div style="left:367px;top:142.6px;width:280.5px;height:0.5px;background:#ececec;"></div>
<div style="left:367px;top:150.5px;width:280.7px;height:6px;background:#f0f0f0;"></div>
<div style="left:373.8px;top:151px;width:181.2px;height:5px;background:#cdcdcd;"></div>
<svg style="position:absolute;left:367px;top:150.5px;" width="281" height="6"><path d="M4.3 1.4 L2.7 3.0 L4.3 4.6" fill="none" stroke="#404040" stroke-width="1"/><path d="M275.6 1.4 L277.2 3.0 L275.6 4.6" fill="none" stroke="#404040" stroke-width="1"/></svg>
<div style="left:284.5px;top:161px;width:364.5px;height:230.7px;background:#fff;"></div>
<svg style="position:absolute;left:0;top:0;" width="830" height="467"><line x1="306.6" y1="205.35999999999999" x2="627.7" y2="205.35999999999999" stroke="#d4d4d4" stroke-width="0.6" stroke-dasharray="1.2 1.8"/><line x1="306.6" y1="223.01999999999998" x2="627.7" y2="223.01999999999998" stroke="#d4d4d4" stroke-width="0.6" stroke-dasharray="1.2 1.8"/><line x1="306.6" y1="240.68" x2="627.7" y2="240.68" stroke="#d4d4d4" stroke-width="0.6" stroke-dasharray="1.2 1.8"/><line x1="306.6" y1="258.34000000000003" x2="627.7" y2="258.34000000000003" stroke="#d4d4d4" stroke-width="0.6" stroke-dasharray="1.2 1.8"/><line x1="306.6" y1="276.0" x2="627.7" y2="276.0" stroke="#d4d4d4" stroke-width="0.6" stroke-dasharray="1.2 1.8"/><line x1="306.6" y1="293.65999999999997" x2="627.7" y2="293.65999999999997" stroke="#d4d4d4" stroke-width="0.6" stroke-dasharray="1.2 1.8"/><line x1="306.6" y1="311.32000000000005" x2="627.7" y2="311.32000000000005" stroke="#d4d4d4" stroke-width="0.6" stroke-dasharray="1.2 1.8"/><line x1="306.6" y1="328.98" x2="627.7" y2="328.98" stroke="#d4d4d4" stroke-width="0.6" stroke-dasharray="1.2 1.8"/><line x1="306.6" y1="346.64" x2="627.7" y2="346.64" stroke="#d4d4d4" stroke-width="0.6" stroke-dasharray="1.2 1.8"/><line x1="319.9791666666667" y1="187.7" x2="319.9791666666667" y2="364.3" stroke="#d4d4d4" stroke-width="0.6" stroke-dasharray="1.2 1.8"/><line x1="333.35833333333335" y1="187.7" x2="333.35833333333335" y2="364.3" stroke="#d4d4d4" stroke-width="0.6" stroke-dasharray="1.2 1.8"/><line x1="346.7375" y1="187.7" x2="346.7375" y2="364.3" stroke="#d4d4d4" stroke-width="0.6" stroke-dasharray="1.2 1.8"/><line x1="360.1166666666667" y1="187.7" x2="360.1166666666667" y2="364.3" stroke="#d4d4d4" stroke-width="0.6" stroke-dasharray="1.2 1.8"/><line x1="373.49583333333334" y1="187.7" x2="373.49583333333334" y2="364.3" stroke="#d4d4d4" stroke-width="0.6" stroke-dasharray="1.2 1.8"/><line x1="386.875" y1="187.7" x2="386.875" y2="364.3" stroke="#d4d4d4" stroke-width="0.6" stroke-dasharray="1.2 1.8"/><line x1="400.2541666666667" y1="187.7" x2="400.2541666666667" y2="364.3" stroke="#d4d4d4" stroke-width="0.6" stroke-dasharray="1.2 1.8"/><line x1="413.6333333333334" y1="187.7" x2="413.6333333333334" y2="364.3" stroke="#d4d4d4" stroke-width="0.6" stroke-dasharray="1.2 1.8"/><line x1="427.01250000000005" y1="187.7" x2="427.01250000000005" y2="364.3" stroke="#d4d4d4" stroke-width="0.6" stroke-dasharray="1.2 1.8"/><line x1="440.39166666666665" y1="187.7" x2="440.39166666666665" y2="364.3" stroke="#d4d4d4" stroke-width="0.6" stroke-dasharray="1.2 1.8"/><line x1="453.77083333333337" y1="187.7" x2="453.77083333333337" y2="364.3" stroke="#d4d4d4" stroke-width="0.6" stroke-dasharray="1.2 1.8"/><line x1="467.15000000000003" y1="187.7" x2="467.15000000000003" y2="364.3" stroke="#d4d4d4" stroke-width="0.6" stroke-dasharray="1.2 1.8"/><line x1="480.5291666666667" y1="187.7" x2="480.5291666666667" y2="364.3" stroke="#d4d4d4" stroke-width="0.6" stroke-dasharray="1.2 1.8"/><line x1="493.9083333333334" y1="187.7" x2="493.9083333333334" y2="364.3" stroke="#d4d4d4" stroke-width="0.6" stroke-dasharray="1.2 1.8"/><line x1="507.2875" y1="187.7" x2="507.2875" y2="364.3" stroke="#d4d4d4" stroke-width="0.6" stroke-dasharray="1.2 1.8"/><line x1="520.6666666666667" y1="187.7" x2="520.6666666666667" y2="364.3" stroke="#d4d4d4" stroke-width="0.6" stroke-dasharray="1.2 1.8"/><line x1="534.0458333333333" y1="187.7" x2="534.0458333333333" y2="364.3" stroke="#d4d4d4" stroke-width="0.6" stroke-dasharray="1.2 1.8"/><line x1="547.4250000000001" y1="187.7" x2="547.4250000000001" y2="364.3" stroke="#d4d4d4" stroke-width="0.6" stroke-dasharray="1.2 1.8"/><line x1="560.8041666666667" y1="187.7" x2="560.8041666666667" y2="364.3" stroke="#d4d4d4" stroke-width="0.6" stroke-dasharray="1.2 1.8"/><line x1="574.1833333333334" y1="187.7" x2="574.1833333333334" y2="364.3" stroke="#d4d4d4" stroke-width="0.6" stroke-dasharray="1.2 1.8"/><line x1="587.5625" y1="187.7" x2="587.5625" y2="364.3" stroke="#d4d4d4" stroke-width="0.6" stroke-dasharray="1.2 1.8"/><line x1="600.9416666666667" y1="187.7" x2="600.9416666666667" y2="364.3" stroke="#d4d4d4" stroke-width="0.6" stroke-dasharray="1.2 1.8"/><line x1="614.3208333333334" y1="187.7" x2="614.3208333333334" y2="364.3" stroke="#d4d4d4" stroke-width="0.6" stroke-dasharray="1.2 1.8"/><rect x="306.6" y="187.7" width="321.1" height="176.60000000000002" fill="none" stroke="#999" stroke-width="1.0"/><line x1="306.6" y1="187.7" x2="306.6" y2="364.3" stroke="#404040" stroke-width="0.9"/><line x1="306.6" y1="364.3" x2="627.7" y2="364.3" stroke="#404040" stroke-width="0.9"/><line x1="306.6" y1="280.2" x2="627.7" y2="280.2" stroke="#505050" stroke-width="0.9"/><line x1="604.3" y1="187.7" x2="604.3" y2="364.3" stroke="#505050" stroke-width="0.9"/></svg>
<div class="t" style="left:270px;top:184.1px;width:34.3px;text-align:right;font-size:6.0px;font-weight:bold;color:#000;-webkit-text-stroke:0.15px #000;">1.28</div>
<div class="t" style="left:270px;top:201.76px;width:34.3px;text-align:right;font-size:6.0px;font-weight:bold;color:#000;-webkit-text-stroke:0.15px #000;">1.13</div>
<div class="t" style="left:270px;top:219.42px;width:34.3px;text-align:right;font-size:6.0px;font-weight:bold;color:#000;-webkit-text-stroke:0.15px #000;">0.97</div>
<div class="t" style="left:270px;top:237.08px;width:34.3px;text-align:right;font-size:6.0px;font-weight:bold;color:#000;-webkit-text-stroke:0.15px #000;">0.81</div>
<div class="t" style="left:270px;top:254.74000000000004px;width:34.3px;text-align:right;font-size:6.0px;font-weight:bold;color:#000;-webkit-text-stroke:0.15px #000;">0.66</div>
<div class="t" style="left:270px;top:272.4px;width:34.3px;text-align:right;font-size:6.0px;font-weight:bold;color:#000;-webkit-text-stroke:0.15px #000;">0.50</div>
<div class="t" style="left:270px;top:290.05999999999995px;width:34.3px;text-align:right;font-size:6.0px;font-weight:bold;color:#000;-webkit-text-stroke:0.15px #000;">0.34</div>
<div class="t" style="left:270px;top:307.72px;width:34.3px;text-align:right;font-size:6.0px;font-weight:bold;color:#000;-webkit-text-stroke:0.15px #000;">0.19</div>
<div class="t" style="left:270px;top:325.38px;width:34.3px;text-align:right;font-size:6.0px;font-weight:bold;color:#000;-webkit-text-stroke:0.15px #000;">0.03</div>
<div class="t" style="left:270px;top:343.03999999999996px;width:34.3px;text-align:right;font-size:6.0px;font-weight:bold;color:#000;-webkit-text-stroke:0.15px #000;">-0.13</div>
<div class="t" style="left:270px;top:360.7px;width:34.3px;text-align:right;font-size:6.0px;font-weight:bold;color:#000;-webkit-text-stroke:0.15px #000;">-0.28</div>
<div class="t" style="left:305.5px;top:367.6px;font-size:6.0px;font-weight:bold;color:#000;-webkit-text-stroke:0.15px #000;">0</div>
<div class="t" style="left:318.87916666666666px;top:367.6px;font-size:6.0px;font-weight:bold;color:#000;-webkit-text-stroke:0.15px #000;">1</div>
<div class="t" style="left:332.2583333333333px;top:367.6px;font-size:6.0px;font-weight:bold;color:#000;-webkit-text-stroke:0.15px #000;">2</div>
<div class="t" style="left:345.6375px;top:367.6px;font-size:6.0px;font-weight:bold;color:#000;-webkit-text-stroke:0.15px #000;">3</div>
<div class="t" style="left:359.01666666666665px;top:367.6px;font-size:6.0px;font-weight:bold;color:#000;-webkit-text-stroke:0.15px #000;">4</div>
<div class="t" style="left:372.3958333333333px;top:367.6px;font-size:6.0px;font-weight:bold;color:#000;-webkit-text-stroke:0.15px #000;">5</div>
<div class="t" style="left:385.775px;top:367.6px;font-size:6.0px;font-weight:bold;color:#000;-webkit-text-stroke:0.15px #000;">6</div>
<div class="t" style="left:399.1541666666667px;top:367.6px;font-size:6.0px;font-weight:bold;color:#000;-webkit-text-stroke:0.15px #000;">7</div>
<div class="t" style="left:412.53333333333336px;top:367.6px;font-size:6.0px;font-weight:bold;color:#000;-webkit-text-stroke:0.15px #000;">8</div>
<div class="t" style="left:425.9125px;top:367.6px;font-size:6.0px;font-weight:bold;color:#000;-webkit-text-stroke:0.15px #000;">9</div>
<div class="t" style="left:439.29166666666663px;top:367.6px;font-size:6.0px;font-weight:bold;color:#000;-webkit-text-stroke:0.15px #000;">10</div>
<div class="t" style="left:452.67083333333335px;top:367.6px;font-size:6.0px;font-weight:bold;color:#000;-webkit-text-stroke:0.15px #000;">11</div>
<div class="t" style="left:466.05px;top:367.6px;font-size:6.0px;font-weight:bold;color:#000;-webkit-text-stroke:0.15px #000;">12</div>
<div class="t" style="left:479.4291666666667px;top:367.6px;font-size:6.0px;font-weight:bold;color:#000;-webkit-text-stroke:0.15px #000;">13</div>
<div class="t" style="left:492.8083333333334px;top:367.6px;font-size:6.0px;font-weight:bold;color:#000;-webkit-text-stroke:0.15px #000;">14</div>
<div class="t" style="left:506.1875px;top:367.6px;font-size:6.0px;font-weight:bold;color:#000;-webkit-text-stroke:0.15px #000;">15</div>
<div class="t" style="left:519.5666666666667px;top:367.6px;font-size:6.0px;font-weight:bold;color:#000;-webkit-text-stroke:0.15px #000;">16</div>
<div class="t" style="left:532.9458333333333px;top:367.6px;font-size:6.0px;font-weight:bold;color:#000;-webkit-text-stroke:0.15px #000;">17</div>
<div class="t" style="left:546.325px;top:367.6px;font-size:6.0px;font-weight:bold;color:#000;-webkit-text-stroke:0.15px #000;">18</div>
<div class="t" style="left:559.7041666666667px;top:367.6px;font-size:6.0px;font-weight:bold;color:#000;-webkit-text-stroke:0.15px #000;">19</div>
<div class="t" style="left:573.0833333333334px;top:367.6px;font-size:6.0px;font-weight:bold;color:#000;-webkit-text-stroke:0.15px #000;">20</div>
<div class="t" style="left:586.4625px;top:367.6px;font-size:6.0px;font-weight:bold;color:#000;-webkit-text-stroke:0.15px #000;">21</div>
<div class="t" style="left:599.8416666666667px;top:367.6px;font-size:6.0px;font-weight:bold;color:#000;-webkit-text-stroke:0.15px #000;">22</div>
<div class="t" style="left:613.2208333333334px;top:367.6px;font-size:6.0px;font-weight:bold;color:#000;-webkit-text-stroke:0.15px #000;">23</div>
<div class="t" style="left:626.6px;top:367.6px;font-size:6.0px;font-weight:bold;color:#000;-webkit-text-stroke:0.15px #000;">0</div>
<div class="t" style="left:300.2px;top:374.2px;font-size:6.2px;font-weight:bold;color:#000;-webkit-text-stroke:0.15px #000;">7<span class="c" style="width:1em">月</span>6<span class="c" style="width:1em">日</span></div>
<div class="t" style="left:621.3px;top:374.2px;font-size:6.2px;font-weight:bold;color:#000;-webkit-text-stroke:0.15px #000;">7<span class="c" style="width:1em">月</span>7<span class="c" style="width:1em">日</span></div>
<div class="t" style="left:597.6px;top:380.6px;font-size:6.3px;font-weight:bold;color:#000;-webkit-text-stroke:0.15px #000;">22<span class="c" style="width:1em">时</span>13<span class="c" style="width:1em">分</span></div>
<div class="t" style="left:630.2px;top:281.0px;font-size:6.0px;font-weight:bold;color:#000;-webkit-text-stroke:0.15px #000;">0.46</div>
<script>(function(){var s=document.createElement("span");s.style.cssText="position:absolute;left:0;top:0;font-family:'Liberation Sans',sans-serif;font-size:100px;line-height:1;white-space:nowrap;visibility:hidden";s.textContent="\u666e\u901a";document.body.appendChild(s);var w=s.getBoundingClientRect().width;document.body.removeChild(s);if(w>185){document.body.className+=" cjk";}})();</script>
</body></html>
